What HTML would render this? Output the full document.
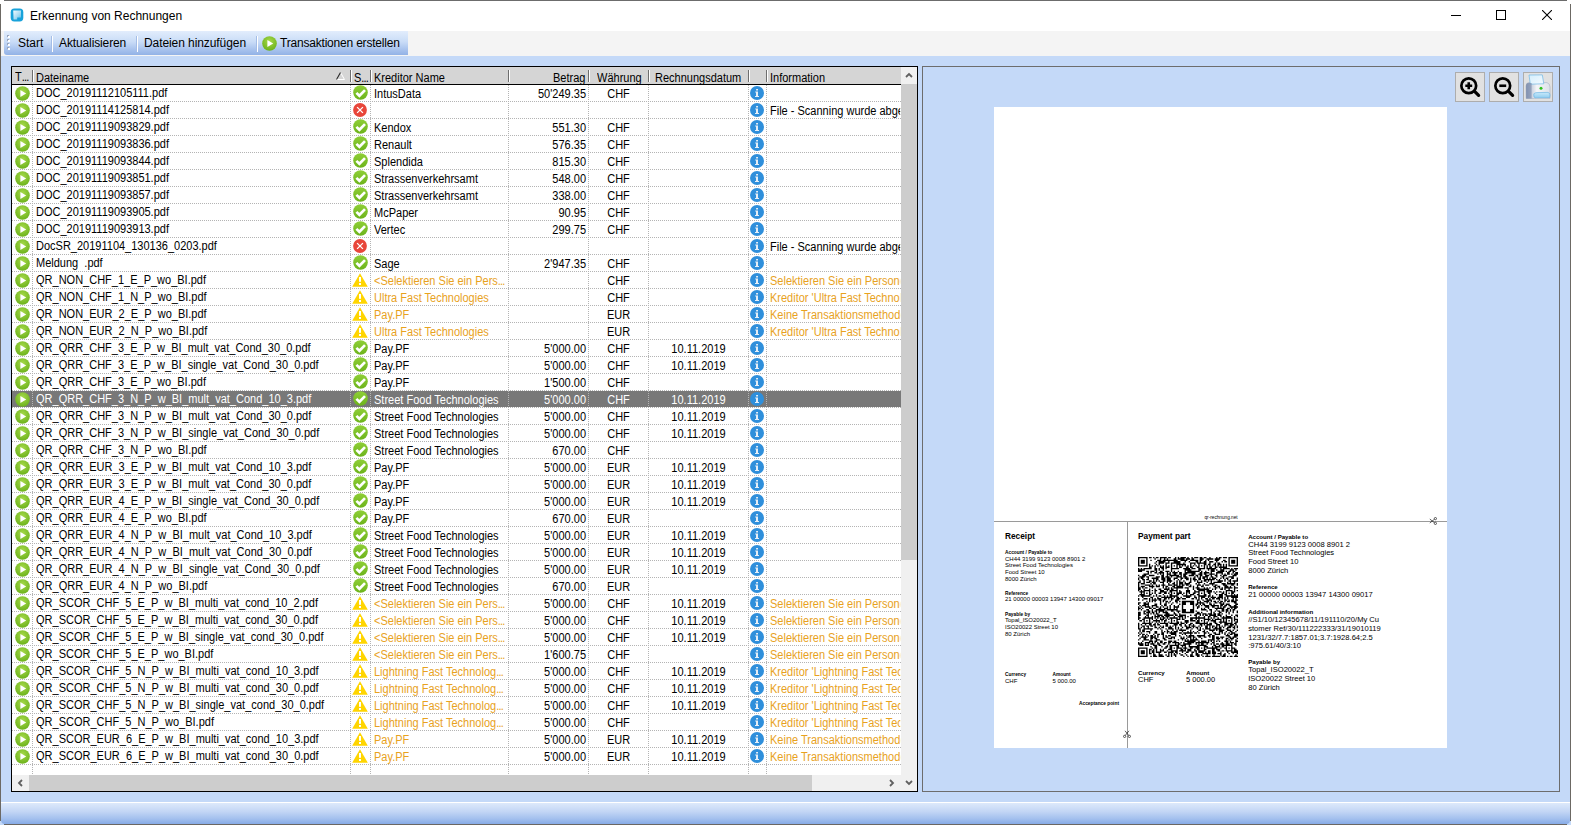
<!DOCTYPE html>
<html><head><meta charset="utf-8"><style>
*{box-sizing:border-box}
html,body{margin:0;padding:0}
body{width:1571px;height:825px;overflow:hidden;position:relative;background:#c4d9f8;font-family:"Liberation Sans",sans-serif;color:#000}
.a{position:absolute}
.ic{position:absolute;display:block}
.t{position:absolute;white-space:pre;font-size:11px;line-height:16px}
.g{position:absolute;white-space:pre;font-size:12px;line-height:16px;transform:scaleX(0.917);transform-origin:0 0}
.gr{transform-origin:100% 0}.gc{transform-origin:50% 0}
</style></head><body>
<svg width="0" height="0" style="position:absolute"><defs><linearGradient id="gok" x1="0" y1="0" x2="0" y2="1"><stop offset="0" stop-color="#8fcf37"/><stop offset="1" stop-color="#6cb31b"/></linearGradient></defs></svg>

<div class="a" style="left:0;top:0;width:1571px;height:31px;background:#fff"></div>
<div class="a" style="left:0;top:31px;width:1571px;height:25px;background:#f4f4f4"></div>
<svg class="ic" style="left:10px;top:8px" width="14" height="14" viewBox="0 0 14 14"><defs><linearGradient id="gi" x1="0" y1="0" x2="1" y2="1"><stop offset="0" stop-color="#ffffff"/><stop offset="0.6" stop-color="#a9dcf3"/><stop offset="1" stop-color="#4fb6e6"/></linearGradient></defs><rect x="0.7" y="0.6" width="12.6" height="12.8" rx="3.6" fill="#18a2da"/><path d="M3.2 2.6 H11 V9.4 H7.2 V11.6 H3.6 Z" fill="url(#gi)" opacity="0.95"/></svg>
<div class="t" style="left:30px;top:8px;font-size:12px;line-height:16px">Erkennung von Rechnungen</div>
<div class="a" style="left:1451px;top:15px;width:10px;height:1px;background:#000"></div>
<div class="a" style="left:1496px;top:10px;width:10px;height:10px;border:1px solid #000"></div>
<svg class="ic" style="left:1542px;top:10px" width="10" height="10" viewBox="0 0 10 10"><path d="M0 0 L10 10 M10 0 L0 10" stroke="#000" stroke-width="1.1"/></svg>
<div class="a" style="left:4px;top:31px;width:404px;height:24px;border-radius:0 0 0 3px;background:linear-gradient(#e2edfc 0%,#c9dcf7 45%,#aac4ee 75%,#92b2e6 100%)"></div>
<div class="a" style="left:7px;top:35px;width:2px;height:2px;background:#9aa6bc"></div>
<div class="a" style="left:8px;top:36px;width:2px;height:2px;background:#fff"></div>
<div class="a" style="left:7px;top:39px;width:2px;height:2px;background:#9aa6bc"></div>
<div class="a" style="left:8px;top:40px;width:2px;height:2px;background:#fff"></div>
<div class="a" style="left:7px;top:43px;width:2px;height:2px;background:#9aa6bc"></div>
<div class="a" style="left:8px;top:44px;width:2px;height:2px;background:#fff"></div>
<div class="a" style="left:7px;top:47px;width:2px;height:2px;background:#9aa6bc"></div>
<div class="a" style="left:8px;top:48px;width:2px;height:2px;background:#fff"></div>
<div class="t" style="left:18px;top:35px;font-size:12px">Start</div>
<div class="a" style="left:51px;top:36px;width:1px;height:16px;background:#a4bde6"></div>
<div class="a" style="left:52px;top:36px;width:1px;height:16px;background:#fff"></div>
<div class="a" style="left:136px;top:36px;width:1px;height:16px;background:#a4bde6"></div>
<div class="a" style="left:137px;top:36px;width:1px;height:16px;background:#fff"></div>
<div class="a" style="left:256px;top:36px;width:1px;height:16px;background:#a4bde6"></div>
<div class="a" style="left:257px;top:36px;width:1px;height:16px;background:#fff"></div>
<div class="t" style="left:59px;top:35px;font-size:12px;letter-spacing:-0.12px">Aktualisieren</div>
<div class="t" style="left:144px;top:35px;font-size:12px;letter-spacing:-0.08px">Dateien hinzufügen</div>
<svg class="ic" style="left:262px;top:36px" width="15" height="15" viewBox="0 0 15 15"><defs><radialGradient id="gp" cx="50%" cy="35%" r="65%"><stop offset="0" stop-color="#a6d94a"/><stop offset="1" stop-color="#6cb21c"/></radialGradient></defs><circle cx="7.5" cy="7.5" r="7.3" fill="url(#gp)"/><path d="M5.4 3.9 L11.2 7.5 L5.4 11.1 Z" fill="#fff"/></svg>
<div class="t" style="left:280px;top:35px;font-size:12px;letter-spacing:-0.2px">Transaktionen erstellen</div>
<div class="a" style="left:11px;top:66px;width:907px;height:726px;border:1px solid #000;background:#fff"></div>
<div class="a" style="left:12px;top:67px;width:889px;height:17px;background:#d5d5d5"></div>
<div class="a" style="left:12px;top:84px;width:889px;height:1px;background:#000"></div>
<div class="a" style="left:32px;top:70px;width:1px;height:12px;background:#6e6e6e"></div>
<div class="a" style="left:33px;top:70px;width:1px;height:12px;background:#fff"></div>
<div class="a" style="left:350px;top:70px;width:1px;height:12px;background:#6e6e6e"></div>
<div class="a" style="left:351px;top:70px;width:1px;height:12px;background:#fff"></div>
<div class="a" style="left:370px;top:70px;width:1px;height:12px;background:#6e6e6e"></div>
<div class="a" style="left:371px;top:70px;width:1px;height:12px;background:#fff"></div>
<div class="a" style="left:508px;top:70px;width:1px;height:12px;background:#6e6e6e"></div>
<div class="a" style="left:509px;top:70px;width:1px;height:12px;background:#fff"></div>
<div class="a" style="left:588px;top:70px;width:1px;height:12px;background:#6e6e6e"></div>
<div class="a" style="left:589px;top:70px;width:1px;height:12px;background:#fff"></div>
<div class="a" style="left:648px;top:70px;width:1px;height:12px;background:#6e6e6e"></div>
<div class="a" style="left:649px;top:70px;width:1px;height:12px;background:#fff"></div>
<div class="a" style="left:748px;top:70px;width:1px;height:12px;background:#6e6e6e"></div>
<div class="a" style="left:749px;top:70px;width:1px;height:12px;background:#fff"></div>
<div class="a" style="left:766px;top:70px;width:1px;height:12px;background:#6e6e6e"></div>
<div class="a" style="left:767px;top:70px;width:1px;height:12px;background:#fff"></div>
<div class="g" style="left:15px;top:68.8px">T<span style="letter-spacing:-0.9px">...</span></div>
<div class="g" style="left:36px;top:69.8px">Dateiname</div>
<div class="g" style="left:354px;top:69.8px">S<span style="letter-spacing:-0.9px">...</span></div>
<div class="g" style="left:374px;top:69.8px">Kreditor Name</div>
<div class="g" style="left:655px;top:69.8px">Rechnungsdatum</div>
<div class="g" style="left:770px;top:69.8px">Information</div>
<div class="g" style="left:553px;top:69.8px">Betrag</div>
<div class="g" style="left:597px;top:69.8px">Währung</div>
<svg class="ic" style="left:336px;top:72px" width="9" height="8" viewBox="0 0 9 8"><path d="M4.5 0.5 L8.5 7.5 L0.5 7.5 Z" fill="none" stroke="#fff" stroke-width="1"/><path d="M4.5 0.5 L0.5 7.5" stroke="#222" stroke-width="1.1"/></svg>
<div class="a" style="left:12px;top:85px;width:889px;height:690px;overflow:hidden">
<div class="a" style="left:0;top:16px;width:889px;height:1px;background:repeating-linear-gradient(90deg,#b4b4b4 0 1px,transparent 1px 2px)"></div>
<svg class="ic" style="left:3px;top:1px" width="15" height="15" viewBox="0 0 15 15"><defs><radialGradient id="gp" cx="50%" cy="35%" r="65%"><stop offset="0" stop-color="#a6d94a"/><stop offset="1" stop-color="#6cb21c"/></radialGradient></defs><circle cx="7.5" cy="7.5" r="7.3" fill="url(#gp)"/><path d="M5.4 3.9 L11.2 7.5 L5.4 11.1 Z" fill="#fff"/></svg>
<div class="g" style="left:24px;top:0.1px;color:#000">DOC_20191112105111.pdf</div>
<svg class="ic" style="left:341px;top:0px" width="15" height="15" viewBox="0 0 15 15"><circle cx="7.5" cy="7.5" r="7.3" fill="url(#gok)"/><path d="M3.4 7.9 L6.4 10.8 L12 5.1" stroke="#fff" stroke-width="2.7" fill="none" stroke-linecap="butt"/></svg>
<div class="g" style="left:362px;top:0.5px;color:#000">IntusData</div>
<div class="g gr" style="left:497px;top:0.5px;width:77px;text-align:right;color:#000">50'249.35</div>
<div class="g gc" style="left:577px;top:0.5px;width:59px;text-align:center;color:#000">CHF</div>
<svg class="ic" style="left:738px;top:1px" width="15" height="15" viewBox="0 0 15 15"><circle cx="7" cy="7" r="7" fill="#2f8fdb"/><rect x="6.1" y="3" width="1.9" height="1.5" fill="#e6eef6"/><path d="M5.2 5.6 H8 V10 H9 V11 H5 V10 H6 V6.6 H5.2 Z" fill="#e6eef6"/></svg>
<div class="a" style="left:0;top:33px;width:889px;height:1px;background:repeating-linear-gradient(90deg,#b4b4b4 0 1px,transparent 1px 2px)"></div>
<svg class="ic" style="left:3px;top:18px" width="15" height="15" viewBox="0 0 15 15"><defs><radialGradient id="gp" cx="50%" cy="35%" r="65%"><stop offset="0" stop-color="#a6d94a"/><stop offset="1" stop-color="#6cb21c"/></radialGradient></defs><circle cx="7.5" cy="7.5" r="7.3" fill="url(#gp)"/><path d="M5.4 3.9 L11.2 7.5 L5.4 11.1 Z" fill="#fff"/></svg>
<div class="g" style="left:24px;top:17.1px;color:#000">DOC_20191114125814.pdf</div>
<svg class="ic" style="left:341px;top:18px" width="15" height="15" viewBox="0 0 15 15"><circle cx="7" cy="7" r="6.9" fill="#e8463a"/><path d="M4.1 4.1 L9.9 9.9 M9.9 4.1 L4.1 9.9" stroke="#fff" stroke-width="1.3" fill="none"/></svg>
<svg class="ic" style="left:738px;top:18px" width="15" height="15" viewBox="0 0 15 15"><circle cx="7" cy="7" r="7" fill="#2f8fdb"/><rect x="6.1" y="3" width="1.9" height="1.5" fill="#e6eef6"/><path d="M5.2 5.6 H8 V10 H9 V11 H5 V10 H6 V6.6 H5.2 Z" fill="#e6eef6"/></svg>
<div class="g" style="left:758px;top:17.5px;width:141.8px;overflow:hidden;color:#000">File - Scanning wurde abgebrochen</div>
<div class="a" style="left:0;top:50px;width:889px;height:1px;background:repeating-linear-gradient(90deg,#b4b4b4 0 1px,transparent 1px 2px)"></div>
<svg class="ic" style="left:3px;top:35px" width="15" height="15" viewBox="0 0 15 15"><defs><radialGradient id="gp" cx="50%" cy="35%" r="65%"><stop offset="0" stop-color="#a6d94a"/><stop offset="1" stop-color="#6cb21c"/></radialGradient></defs><circle cx="7.5" cy="7.5" r="7.3" fill="url(#gp)"/><path d="M5.4 3.9 L11.2 7.5 L5.4 11.1 Z" fill="#fff"/></svg>
<div class="g" style="left:24px;top:34.1px;color:#000">DOC_20191119093829.pdf</div>
<svg class="ic" style="left:341px;top:34px" width="15" height="15" viewBox="0 0 15 15"><circle cx="7.5" cy="7.5" r="7.3" fill="url(#gok)"/><path d="M3.4 7.9 L6.4 10.8 L12 5.1" stroke="#fff" stroke-width="2.7" fill="none" stroke-linecap="butt"/></svg>
<div class="g" style="left:362px;top:34.5px;color:#000">Kendox</div>
<div class="g gr" style="left:497px;top:34.5px;width:77px;text-align:right;color:#000">551.30</div>
<div class="g gc" style="left:577px;top:34.5px;width:59px;text-align:center;color:#000">CHF</div>
<svg class="ic" style="left:738px;top:35px" width="15" height="15" viewBox="0 0 15 15"><circle cx="7" cy="7" r="7" fill="#2f8fdb"/><rect x="6.1" y="3" width="1.9" height="1.5" fill="#e6eef6"/><path d="M5.2 5.6 H8 V10 H9 V11 H5 V10 H6 V6.6 H5.2 Z" fill="#e6eef6"/></svg>
<div class="a" style="left:0;top:67px;width:889px;height:1px;background:repeating-linear-gradient(90deg,#b4b4b4 0 1px,transparent 1px 2px)"></div>
<svg class="ic" style="left:3px;top:52px" width="15" height="15" viewBox="0 0 15 15"><defs><radialGradient id="gp" cx="50%" cy="35%" r="65%"><stop offset="0" stop-color="#a6d94a"/><stop offset="1" stop-color="#6cb21c"/></radialGradient></defs><circle cx="7.5" cy="7.5" r="7.3" fill="url(#gp)"/><path d="M5.4 3.9 L11.2 7.5 L5.4 11.1 Z" fill="#fff"/></svg>
<div class="g" style="left:24px;top:51.1px;color:#000">DOC_20191119093836.pdf</div>
<svg class="ic" style="left:341px;top:51px" width="15" height="15" viewBox="0 0 15 15"><circle cx="7.5" cy="7.5" r="7.3" fill="url(#gok)"/><path d="M3.4 7.9 L6.4 10.8 L12 5.1" stroke="#fff" stroke-width="2.7" fill="none" stroke-linecap="butt"/></svg>
<div class="g" style="left:362px;top:51.5px;color:#000">Renault</div>
<div class="g gr" style="left:497px;top:51.5px;width:77px;text-align:right;color:#000">576.35</div>
<div class="g gc" style="left:577px;top:51.5px;width:59px;text-align:center;color:#000">CHF</div>
<svg class="ic" style="left:738px;top:52px" width="15" height="15" viewBox="0 0 15 15"><circle cx="7" cy="7" r="7" fill="#2f8fdb"/><rect x="6.1" y="3" width="1.9" height="1.5" fill="#e6eef6"/><path d="M5.2 5.6 H8 V10 H9 V11 H5 V10 H6 V6.6 H5.2 Z" fill="#e6eef6"/></svg>
<div class="a" style="left:0;top:84px;width:889px;height:1px;background:repeating-linear-gradient(90deg,#b4b4b4 0 1px,transparent 1px 2px)"></div>
<svg class="ic" style="left:3px;top:69px" width="15" height="15" viewBox="0 0 15 15"><defs><radialGradient id="gp" cx="50%" cy="35%" r="65%"><stop offset="0" stop-color="#a6d94a"/><stop offset="1" stop-color="#6cb21c"/></radialGradient></defs><circle cx="7.5" cy="7.5" r="7.3" fill="url(#gp)"/><path d="M5.4 3.9 L11.2 7.5 L5.4 11.1 Z" fill="#fff"/></svg>
<div class="g" style="left:24px;top:68.1px;color:#000">DOC_20191119093844.pdf</div>
<svg class="ic" style="left:341px;top:68px" width="15" height="15" viewBox="0 0 15 15"><circle cx="7.5" cy="7.5" r="7.3" fill="url(#gok)"/><path d="M3.4 7.9 L6.4 10.8 L12 5.1" stroke="#fff" stroke-width="2.7" fill="none" stroke-linecap="butt"/></svg>
<div class="g" style="left:362px;top:68.5px;color:#000">Splendida</div>
<div class="g gr" style="left:497px;top:68.5px;width:77px;text-align:right;color:#000">815.30</div>
<div class="g gc" style="left:577px;top:68.5px;width:59px;text-align:center;color:#000">CHF</div>
<svg class="ic" style="left:738px;top:69px" width="15" height="15" viewBox="0 0 15 15"><circle cx="7" cy="7" r="7" fill="#2f8fdb"/><rect x="6.1" y="3" width="1.9" height="1.5" fill="#e6eef6"/><path d="M5.2 5.6 H8 V10 H9 V11 H5 V10 H6 V6.6 H5.2 Z" fill="#e6eef6"/></svg>
<div class="a" style="left:0;top:101px;width:889px;height:1px;background:repeating-linear-gradient(90deg,#b4b4b4 0 1px,transparent 1px 2px)"></div>
<svg class="ic" style="left:3px;top:86px" width="15" height="15" viewBox="0 0 15 15"><defs><radialGradient id="gp" cx="50%" cy="35%" r="65%"><stop offset="0" stop-color="#a6d94a"/><stop offset="1" stop-color="#6cb21c"/></radialGradient></defs><circle cx="7.5" cy="7.5" r="7.3" fill="url(#gp)"/><path d="M5.4 3.9 L11.2 7.5 L5.4 11.1 Z" fill="#fff"/></svg>
<div class="g" style="left:24px;top:85.1px;color:#000">DOC_20191119093851.pdf</div>
<svg class="ic" style="left:341px;top:85px" width="15" height="15" viewBox="0 0 15 15"><circle cx="7.5" cy="7.5" r="7.3" fill="url(#gok)"/><path d="M3.4 7.9 L6.4 10.8 L12 5.1" stroke="#fff" stroke-width="2.7" fill="none" stroke-linecap="butt"/></svg>
<div class="g" style="left:362px;top:85.5px;color:#000">Strassenverkehrsamt</div>
<div class="g gr" style="left:497px;top:85.5px;width:77px;text-align:right;color:#000">548.00</div>
<div class="g gc" style="left:577px;top:85.5px;width:59px;text-align:center;color:#000">CHF</div>
<svg class="ic" style="left:738px;top:86px" width="15" height="15" viewBox="0 0 15 15"><circle cx="7" cy="7" r="7" fill="#2f8fdb"/><rect x="6.1" y="3" width="1.9" height="1.5" fill="#e6eef6"/><path d="M5.2 5.6 H8 V10 H9 V11 H5 V10 H6 V6.6 H5.2 Z" fill="#e6eef6"/></svg>
<div class="a" style="left:0;top:118px;width:889px;height:1px;background:repeating-linear-gradient(90deg,#b4b4b4 0 1px,transparent 1px 2px)"></div>
<svg class="ic" style="left:3px;top:103px" width="15" height="15" viewBox="0 0 15 15"><defs><radialGradient id="gp" cx="50%" cy="35%" r="65%"><stop offset="0" stop-color="#a6d94a"/><stop offset="1" stop-color="#6cb21c"/></radialGradient></defs><circle cx="7.5" cy="7.5" r="7.3" fill="url(#gp)"/><path d="M5.4 3.9 L11.2 7.5 L5.4 11.1 Z" fill="#fff"/></svg>
<div class="g" style="left:24px;top:102.1px;color:#000">DOC_20191119093857.pdf</div>
<svg class="ic" style="left:341px;top:102px" width="15" height="15" viewBox="0 0 15 15"><circle cx="7.5" cy="7.5" r="7.3" fill="url(#gok)"/><path d="M3.4 7.9 L6.4 10.8 L12 5.1" stroke="#fff" stroke-width="2.7" fill="none" stroke-linecap="butt"/></svg>
<div class="g" style="left:362px;top:102.5px;color:#000">Strassenverkehrsamt</div>
<div class="g gr" style="left:497px;top:102.5px;width:77px;text-align:right;color:#000">338.00</div>
<div class="g gc" style="left:577px;top:102.5px;width:59px;text-align:center;color:#000">CHF</div>
<svg class="ic" style="left:738px;top:103px" width="15" height="15" viewBox="0 0 15 15"><circle cx="7" cy="7" r="7" fill="#2f8fdb"/><rect x="6.1" y="3" width="1.9" height="1.5" fill="#e6eef6"/><path d="M5.2 5.6 H8 V10 H9 V11 H5 V10 H6 V6.6 H5.2 Z" fill="#e6eef6"/></svg>
<div class="a" style="left:0;top:135px;width:889px;height:1px;background:repeating-linear-gradient(90deg,#b4b4b4 0 1px,transparent 1px 2px)"></div>
<svg class="ic" style="left:3px;top:120px" width="15" height="15" viewBox="0 0 15 15"><defs><radialGradient id="gp" cx="50%" cy="35%" r="65%"><stop offset="0" stop-color="#a6d94a"/><stop offset="1" stop-color="#6cb21c"/></radialGradient></defs><circle cx="7.5" cy="7.5" r="7.3" fill="url(#gp)"/><path d="M5.4 3.9 L11.2 7.5 L5.4 11.1 Z" fill="#fff"/></svg>
<div class="g" style="left:24px;top:119.1px;color:#000">DOC_20191119093905.pdf</div>
<svg class="ic" style="left:341px;top:119px" width="15" height="15" viewBox="0 0 15 15"><circle cx="7.5" cy="7.5" r="7.3" fill="url(#gok)"/><path d="M3.4 7.9 L6.4 10.8 L12 5.1" stroke="#fff" stroke-width="2.7" fill="none" stroke-linecap="butt"/></svg>
<div class="g" style="left:362px;top:119.5px;color:#000">McPaper</div>
<div class="g gr" style="left:497px;top:119.5px;width:77px;text-align:right;color:#000">90.95</div>
<div class="g gc" style="left:577px;top:119.5px;width:59px;text-align:center;color:#000">CHF</div>
<svg class="ic" style="left:738px;top:120px" width="15" height="15" viewBox="0 0 15 15"><circle cx="7" cy="7" r="7" fill="#2f8fdb"/><rect x="6.1" y="3" width="1.9" height="1.5" fill="#e6eef6"/><path d="M5.2 5.6 H8 V10 H9 V11 H5 V10 H6 V6.6 H5.2 Z" fill="#e6eef6"/></svg>
<div class="a" style="left:0;top:152px;width:889px;height:1px;background:repeating-linear-gradient(90deg,#b4b4b4 0 1px,transparent 1px 2px)"></div>
<svg class="ic" style="left:3px;top:137px" width="15" height="15" viewBox="0 0 15 15"><defs><radialGradient id="gp" cx="50%" cy="35%" r="65%"><stop offset="0" stop-color="#a6d94a"/><stop offset="1" stop-color="#6cb21c"/></radialGradient></defs><circle cx="7.5" cy="7.5" r="7.3" fill="url(#gp)"/><path d="M5.4 3.9 L11.2 7.5 L5.4 11.1 Z" fill="#fff"/></svg>
<div class="g" style="left:24px;top:136.1px;color:#000">DOC_20191119093913.pdf</div>
<svg class="ic" style="left:341px;top:136px" width="15" height="15" viewBox="0 0 15 15"><circle cx="7.5" cy="7.5" r="7.3" fill="url(#gok)"/><path d="M3.4 7.9 L6.4 10.8 L12 5.1" stroke="#fff" stroke-width="2.7" fill="none" stroke-linecap="butt"/></svg>
<div class="g" style="left:362px;top:136.5px;color:#000">Vertec</div>
<div class="g gr" style="left:497px;top:136.5px;width:77px;text-align:right;color:#000">299.75</div>
<div class="g gc" style="left:577px;top:136.5px;width:59px;text-align:center;color:#000">CHF</div>
<svg class="ic" style="left:738px;top:137px" width="15" height="15" viewBox="0 0 15 15"><circle cx="7" cy="7" r="7" fill="#2f8fdb"/><rect x="6.1" y="3" width="1.9" height="1.5" fill="#e6eef6"/><path d="M5.2 5.6 H8 V10 H9 V11 H5 V10 H6 V6.6 H5.2 Z" fill="#e6eef6"/></svg>
<div class="a" style="left:0;top:169px;width:889px;height:1px;background:repeating-linear-gradient(90deg,#b4b4b4 0 1px,transparent 1px 2px)"></div>
<svg class="ic" style="left:3px;top:154px" width="15" height="15" viewBox="0 0 15 15"><defs><radialGradient id="gp" cx="50%" cy="35%" r="65%"><stop offset="0" stop-color="#a6d94a"/><stop offset="1" stop-color="#6cb21c"/></radialGradient></defs><circle cx="7.5" cy="7.5" r="7.3" fill="url(#gp)"/><path d="M5.4 3.9 L11.2 7.5 L5.4 11.1 Z" fill="#fff"/></svg>
<div class="g" style="left:24px;top:153.1px;color:#000">DocSR_20191104_130136_0203.pdf</div>
<svg class="ic" style="left:341px;top:154px" width="15" height="15" viewBox="0 0 15 15"><circle cx="7" cy="7" r="6.9" fill="#e8463a"/><path d="M4.1 4.1 L9.9 9.9 M9.9 4.1 L4.1 9.9" stroke="#fff" stroke-width="1.3" fill="none"/></svg>
<svg class="ic" style="left:738px;top:154px" width="15" height="15" viewBox="0 0 15 15"><circle cx="7" cy="7" r="7" fill="#2f8fdb"/><rect x="6.1" y="3" width="1.9" height="1.5" fill="#e6eef6"/><path d="M5.2 5.6 H8 V10 H9 V11 H5 V10 H6 V6.6 H5.2 Z" fill="#e6eef6"/></svg>
<div class="g" style="left:758px;top:153.5px;width:141.8px;overflow:hidden;color:#000">File - Scanning wurde abgebrochen</div>
<div class="a" style="left:0;top:186px;width:889px;height:1px;background:repeating-linear-gradient(90deg,#b4b4b4 0 1px,transparent 1px 2px)"></div>
<svg class="ic" style="left:3px;top:171px" width="15" height="15" viewBox="0 0 15 15"><defs><radialGradient id="gp" cx="50%" cy="35%" r="65%"><stop offset="0" stop-color="#a6d94a"/><stop offset="1" stop-color="#6cb21c"/></radialGradient></defs><circle cx="7.5" cy="7.5" r="7.3" fill="url(#gp)"/><path d="M5.4 3.9 L11.2 7.5 L5.4 11.1 Z" fill="#fff"/></svg>
<div class="g" style="left:24px;top:170.1px;color:#000">Meldung&nbsp;&nbsp;.pdf</div>
<svg class="ic" style="left:341px;top:170px" width="15" height="15" viewBox="0 0 15 15"><circle cx="7.5" cy="7.5" r="7.3" fill="url(#gok)"/><path d="M3.4 7.9 L6.4 10.8 L12 5.1" stroke="#fff" stroke-width="2.7" fill="none" stroke-linecap="butt"/></svg>
<div class="g" style="left:362px;top:170.5px;color:#000">Sage</div>
<div class="g gr" style="left:497px;top:170.5px;width:77px;text-align:right;color:#000">2'947.35</div>
<div class="g gc" style="left:577px;top:170.5px;width:59px;text-align:center;color:#000">CHF</div>
<svg class="ic" style="left:738px;top:171px" width="15" height="15" viewBox="0 0 15 15"><circle cx="7" cy="7" r="7" fill="#2f8fdb"/><rect x="6.1" y="3" width="1.9" height="1.5" fill="#e6eef6"/><path d="M5.2 5.6 H8 V10 H9 V11 H5 V10 H6 V6.6 H5.2 Z" fill="#e6eef6"/></svg>
<div class="a" style="left:0;top:203px;width:889px;height:1px;background:repeating-linear-gradient(90deg,#b4b4b4 0 1px,transparent 1px 2px)"></div>
<svg class="ic" style="left:3px;top:188px" width="15" height="15" viewBox="0 0 15 15"><defs><radialGradient id="gp" cx="50%" cy="35%" r="65%"><stop offset="0" stop-color="#a6d94a"/><stop offset="1" stop-color="#6cb21c"/></radialGradient></defs><circle cx="7.5" cy="7.5" r="7.3" fill="url(#gp)"/><path d="M5.4 3.9 L11.2 7.5 L5.4 11.1 Z" fill="#fff"/></svg>
<div class="g" style="left:24px;top:187.1px;color:#000">QR_NON_CHF_1_E_P_wo_BI.pdf</div>
<svg class="ic" style="left:340px;top:188px" width="16" height="15" viewBox="0 0 16 15"><path d="M8 0.2 L15.8 13.8 L0.2 13.8 Z" fill="#ffd500"/><rect x="7" y="4" width="2" height="4.8" fill="#fff"/><rect x="7" y="10" width="2" height="2" fill="#fff"/></svg>
<div class="g" style="left:362px;top:187.5px;color:#e8a21e">&lt;Selektieren Sie ein Pers<span style="letter-spacing:-0.9px">...</span></div>
<div class="g gc" style="left:577px;top:187.5px;width:59px;text-align:center;color:#000">CHF</div>
<svg class="ic" style="left:738px;top:188px" width="15" height="15" viewBox="0 0 15 15"><circle cx="7" cy="7" r="7" fill="#2f8fdb"/><rect x="6.1" y="3" width="1.9" height="1.5" fill="#e6eef6"/><path d="M5.2 5.6 H8 V10 H9 V11 H5 V10 H6 V6.6 H5.2 Z" fill="#e6eef6"/></svg>
<div class="g" style="left:758px;top:187.5px;width:141.8px;overflow:hidden;color:#e8a21e">Selektieren Sie ein Personenkonto</div>
<div class="a" style="left:0;top:220px;width:889px;height:1px;background:repeating-linear-gradient(90deg,#b4b4b4 0 1px,transparent 1px 2px)"></div>
<svg class="ic" style="left:3px;top:205px" width="15" height="15" viewBox="0 0 15 15"><defs><radialGradient id="gp" cx="50%" cy="35%" r="65%"><stop offset="0" stop-color="#a6d94a"/><stop offset="1" stop-color="#6cb21c"/></radialGradient></defs><circle cx="7.5" cy="7.5" r="7.3" fill="url(#gp)"/><path d="M5.4 3.9 L11.2 7.5 L5.4 11.1 Z" fill="#fff"/></svg>
<div class="g" style="left:24px;top:204.1px;color:#000">QR_NON_CHF_1_N_P_wo_BI.pdf</div>
<svg class="ic" style="left:340px;top:205px" width="16" height="15" viewBox="0 0 16 15"><path d="M8 0.2 L15.8 13.8 L0.2 13.8 Z" fill="#ffd500"/><rect x="7" y="4" width="2" height="4.8" fill="#fff"/><rect x="7" y="10" width="2" height="2" fill="#fff"/></svg>
<div class="g" style="left:362px;top:204.5px;color:#e8a21e">Ultra Fast Technologies</div>
<div class="g gc" style="left:577px;top:204.5px;width:59px;text-align:center;color:#000">CHF</div>
<svg class="ic" style="left:738px;top:205px" width="15" height="15" viewBox="0 0 15 15"><circle cx="7" cy="7" r="7" fill="#2f8fdb"/><rect x="6.1" y="3" width="1.9" height="1.5" fill="#e6eef6"/><path d="M5.2 5.6 H8 V10 H9 V11 H5 V10 H6 V6.6 H5.2 Z" fill="#e6eef6"/></svg>
<div class="g" style="left:758px;top:204.5px;width:141.8px;overflow:hidden;color:#e8a21e">Kreditor 'Ultra Fast Technologies'</div>
<div class="a" style="left:0;top:237px;width:889px;height:1px;background:repeating-linear-gradient(90deg,#b4b4b4 0 1px,transparent 1px 2px)"></div>
<svg class="ic" style="left:3px;top:222px" width="15" height="15" viewBox="0 0 15 15"><defs><radialGradient id="gp" cx="50%" cy="35%" r="65%"><stop offset="0" stop-color="#a6d94a"/><stop offset="1" stop-color="#6cb21c"/></radialGradient></defs><circle cx="7.5" cy="7.5" r="7.3" fill="url(#gp)"/><path d="M5.4 3.9 L11.2 7.5 L5.4 11.1 Z" fill="#fff"/></svg>
<div class="g" style="left:24px;top:221.1px;color:#000">QR_NON_EUR_2_E_P_wo_BI.pdf</div>
<svg class="ic" style="left:340px;top:222px" width="16" height="15" viewBox="0 0 16 15"><path d="M8 0.2 L15.8 13.8 L0.2 13.8 Z" fill="#ffd500"/><rect x="7" y="4" width="2" height="4.8" fill="#fff"/><rect x="7" y="10" width="2" height="2" fill="#fff"/></svg>
<div class="g" style="left:362px;top:221.5px;color:#e8a21e">Pay.PF</div>
<div class="g gc" style="left:577px;top:221.5px;width:59px;text-align:center;color:#000">EUR</div>
<svg class="ic" style="left:738px;top:222px" width="15" height="15" viewBox="0 0 15 15"><circle cx="7" cy="7" r="7" fill="#2f8fdb"/><rect x="6.1" y="3" width="1.9" height="1.5" fill="#e6eef6"/><path d="M5.2 5.6 H8 V10 H9 V11 H5 V10 H6 V6.6 H5.2 Z" fill="#e6eef6"/></svg>
<div class="g" style="left:758px;top:221.5px;width:141.8px;overflow:hidden;color:#e8a21e">Keine Transaktionsmethode</div>
<div class="a" style="left:0;top:254px;width:889px;height:1px;background:repeating-linear-gradient(90deg,#b4b4b4 0 1px,transparent 1px 2px)"></div>
<svg class="ic" style="left:3px;top:239px" width="15" height="15" viewBox="0 0 15 15"><defs><radialGradient id="gp" cx="50%" cy="35%" r="65%"><stop offset="0" stop-color="#a6d94a"/><stop offset="1" stop-color="#6cb21c"/></radialGradient></defs><circle cx="7.5" cy="7.5" r="7.3" fill="url(#gp)"/><path d="M5.4 3.9 L11.2 7.5 L5.4 11.1 Z" fill="#fff"/></svg>
<div class="g" style="left:24px;top:238.1px;color:#000">QR_NON_EUR_2_N_P_wo_BI.pdf</div>
<svg class="ic" style="left:340px;top:239px" width="16" height="15" viewBox="0 0 16 15"><path d="M8 0.2 L15.8 13.8 L0.2 13.8 Z" fill="#ffd500"/><rect x="7" y="4" width="2" height="4.8" fill="#fff"/><rect x="7" y="10" width="2" height="2" fill="#fff"/></svg>
<div class="g" style="left:362px;top:238.5px;color:#e8a21e">Ultra Fast Technologies</div>
<div class="g gc" style="left:577px;top:238.5px;width:59px;text-align:center;color:#000">EUR</div>
<svg class="ic" style="left:738px;top:239px" width="15" height="15" viewBox="0 0 15 15"><circle cx="7" cy="7" r="7" fill="#2f8fdb"/><rect x="6.1" y="3" width="1.9" height="1.5" fill="#e6eef6"/><path d="M5.2 5.6 H8 V10 H9 V11 H5 V10 H6 V6.6 H5.2 Z" fill="#e6eef6"/></svg>
<div class="g" style="left:758px;top:238.5px;width:141.8px;overflow:hidden;color:#e8a21e">Kreditor 'Ultra Fast Technologies'</div>
<div class="a" style="left:0;top:271px;width:889px;height:1px;background:repeating-linear-gradient(90deg,#b4b4b4 0 1px,transparent 1px 2px)"></div>
<svg class="ic" style="left:3px;top:256px" width="15" height="15" viewBox="0 0 15 15"><defs><radialGradient id="gp" cx="50%" cy="35%" r="65%"><stop offset="0" stop-color="#a6d94a"/><stop offset="1" stop-color="#6cb21c"/></radialGradient></defs><circle cx="7.5" cy="7.5" r="7.3" fill="url(#gp)"/><path d="M5.4 3.9 L11.2 7.5 L5.4 11.1 Z" fill="#fff"/></svg>
<div class="g" style="left:24px;top:255.1px;color:#000">QR_QRR_CHF_3_E_P_w_BI_mult_vat_Cond_30_0.pdf</div>
<svg class="ic" style="left:341px;top:255px" width="15" height="15" viewBox="0 0 15 15"><circle cx="7.5" cy="7.5" r="7.3" fill="url(#gok)"/><path d="M3.4 7.9 L6.4 10.8 L12 5.1" stroke="#fff" stroke-width="2.7" fill="none" stroke-linecap="butt"/></svg>
<div class="g" style="left:362px;top:255.5px;color:#000">Pay.PF</div>
<div class="g gr" style="left:497px;top:255.5px;width:77px;text-align:right;color:#000">5'000.00</div>
<div class="g gc" style="left:577px;top:255.5px;width:59px;text-align:center;color:#000">CHF</div>
<div class="g gc" style="left:637px;top:255.5px;width:99px;text-align:center;color:#000">10.11.2019</div>
<svg class="ic" style="left:738px;top:256px" width="15" height="15" viewBox="0 0 15 15"><circle cx="7" cy="7" r="7" fill="#2f8fdb"/><rect x="6.1" y="3" width="1.9" height="1.5" fill="#e6eef6"/><path d="M5.2 5.6 H8 V10 H9 V11 H5 V10 H6 V6.6 H5.2 Z" fill="#e6eef6"/></svg>
<div class="a" style="left:0;top:288px;width:889px;height:1px;background:repeating-linear-gradient(90deg,#b4b4b4 0 1px,transparent 1px 2px)"></div>
<svg class="ic" style="left:3px;top:273px" width="15" height="15" viewBox="0 0 15 15"><defs><radialGradient id="gp" cx="50%" cy="35%" r="65%"><stop offset="0" stop-color="#a6d94a"/><stop offset="1" stop-color="#6cb21c"/></radialGradient></defs><circle cx="7.5" cy="7.5" r="7.3" fill="url(#gp)"/><path d="M5.4 3.9 L11.2 7.5 L5.4 11.1 Z" fill="#fff"/></svg>
<div class="g" style="left:24px;top:272.1px;color:#000">QR_QRR_CHF_3_E_P_w_BI_single_vat_Cond_30_0.pdf</div>
<svg class="ic" style="left:341px;top:272px" width="15" height="15" viewBox="0 0 15 15"><circle cx="7.5" cy="7.5" r="7.3" fill="url(#gok)"/><path d="M3.4 7.9 L6.4 10.8 L12 5.1" stroke="#fff" stroke-width="2.7" fill="none" stroke-linecap="butt"/></svg>
<div class="g" style="left:362px;top:272.5px;color:#000">Pay.PF</div>
<div class="g gr" style="left:497px;top:272.5px;width:77px;text-align:right;color:#000">5'000.00</div>
<div class="g gc" style="left:577px;top:272.5px;width:59px;text-align:center;color:#000">CHF</div>
<div class="g gc" style="left:637px;top:272.5px;width:99px;text-align:center;color:#000">10.11.2019</div>
<svg class="ic" style="left:738px;top:273px" width="15" height="15" viewBox="0 0 15 15"><circle cx="7" cy="7" r="7" fill="#2f8fdb"/><rect x="6.1" y="3" width="1.9" height="1.5" fill="#e6eef6"/><path d="M5.2 5.6 H8 V10 H9 V11 H5 V10 H6 V6.6 H5.2 Z" fill="#e6eef6"/></svg>
<div class="a" style="left:0;top:305px;width:889px;height:1px;background:repeating-linear-gradient(90deg,#b4b4b4 0 1px,transparent 1px 2px)"></div>
<svg class="ic" style="left:3px;top:290px" width="15" height="15" viewBox="0 0 15 15"><defs><radialGradient id="gp" cx="50%" cy="35%" r="65%"><stop offset="0" stop-color="#a6d94a"/><stop offset="1" stop-color="#6cb21c"/></radialGradient></defs><circle cx="7.5" cy="7.5" r="7.3" fill="url(#gp)"/><path d="M5.4 3.9 L11.2 7.5 L5.4 11.1 Z" fill="#fff"/></svg>
<div class="g" style="left:24px;top:289.1px;color:#000">QR_QRR_CHF_3_E_P_wo_BI.pdf</div>
<svg class="ic" style="left:341px;top:289px" width="15" height="15" viewBox="0 0 15 15"><circle cx="7.5" cy="7.5" r="7.3" fill="url(#gok)"/><path d="M3.4 7.9 L6.4 10.8 L12 5.1" stroke="#fff" stroke-width="2.7" fill="none" stroke-linecap="butt"/></svg>
<div class="g" style="left:362px;top:289.5px;color:#000">Pay.PF</div>
<div class="g gr" style="left:497px;top:289.5px;width:77px;text-align:right;color:#000">1'500.00</div>
<div class="g gc" style="left:577px;top:289.5px;width:59px;text-align:center;color:#000">CHF</div>
<svg class="ic" style="left:738px;top:290px" width="15" height="15" viewBox="0 0 15 15"><circle cx="7" cy="7" r="7" fill="#2f8fdb"/><rect x="6.1" y="3" width="1.9" height="1.5" fill="#e6eef6"/><path d="M5.2 5.6 H8 V10 H9 V11 H5 V10 H6 V6.6 H5.2 Z" fill="#e6eef6"/></svg>
<div class="a" style="left:0;top:306px;width:889px;height:16px;background:#787878"></div>
<div class="a" style="left:0;top:322px;width:889px;height:1px;background:repeating-linear-gradient(90deg,#b4b4b4 0 1px,transparent 1px 2px)"></div>
<svg class="ic" style="left:3px;top:307px" width="15" height="15" viewBox="0 0 15 15"><defs><radialGradient id="gp" cx="50%" cy="35%" r="65%"><stop offset="0" stop-color="#a6d94a"/><stop offset="1" stop-color="#6cb21c"/></radialGradient></defs><circle cx="7.5" cy="7.5" r="7.3" fill="url(#gp)"/><path d="M5.4 3.9 L11.2 7.5 L5.4 11.1 Z" fill="#fff"/></svg>
<div class="g" style="left:24px;top:306.1px;color:#fff">QR_QRR_CHF_3_N_P_w_BI_mult_vat_Cond_10_3.pdf</div>
<svg class="ic" style="left:341px;top:306px" width="15" height="15" viewBox="0 0 15 15"><circle cx="7.5" cy="7.5" r="7.3" fill="url(#gok)"/><path d="M3.4 7.9 L6.4 10.8 L12 5.1" stroke="#fff" stroke-width="2.7" fill="none" stroke-linecap="butt"/></svg>
<div class="g" style="left:362px;top:306.5px;color:#fff">Street Food Technologies</div>
<div class="g gr" style="left:497px;top:306.5px;width:77px;text-align:right;color:#fff">5'000.00</div>
<div class="g gc" style="left:577px;top:306.5px;width:59px;text-align:center;color:#fff">CHF</div>
<div class="g gc" style="left:637px;top:306.5px;width:99px;text-align:center;color:#fff">10.11.2019</div>
<svg class="ic" style="left:738px;top:307px" width="15" height="15" viewBox="0 0 15 15"><circle cx="7" cy="7" r="7" fill="#2f8fdb"/><rect x="6.1" y="3" width="1.9" height="1.5" fill="#e6eef6"/><path d="M5.2 5.6 H8 V10 H9 V11 H5 V10 H6 V6.6 H5.2 Z" fill="#e6eef6"/></svg>
<div class="a" style="left:0;top:339px;width:889px;height:1px;background:repeating-linear-gradient(90deg,#b4b4b4 0 1px,transparent 1px 2px)"></div>
<svg class="ic" style="left:3px;top:324px" width="15" height="15" viewBox="0 0 15 15"><defs><radialGradient id="gp" cx="50%" cy="35%" r="65%"><stop offset="0" stop-color="#a6d94a"/><stop offset="1" stop-color="#6cb21c"/></radialGradient></defs><circle cx="7.5" cy="7.5" r="7.3" fill="url(#gp)"/><path d="M5.4 3.9 L11.2 7.5 L5.4 11.1 Z" fill="#fff"/></svg>
<div class="g" style="left:24px;top:323.1px;color:#000">QR_QRR_CHF_3_N_P_w_BI_mult_vat_Cond_30_0.pdf</div>
<svg class="ic" style="left:341px;top:323px" width="15" height="15" viewBox="0 0 15 15"><circle cx="7.5" cy="7.5" r="7.3" fill="url(#gok)"/><path d="M3.4 7.9 L6.4 10.8 L12 5.1" stroke="#fff" stroke-width="2.7" fill="none" stroke-linecap="butt"/></svg>
<div class="g" style="left:362px;top:323.5px;color:#000">Street Food Technologies</div>
<div class="g gr" style="left:497px;top:323.5px;width:77px;text-align:right;color:#000">5'000.00</div>
<div class="g gc" style="left:577px;top:323.5px;width:59px;text-align:center;color:#000">CHF</div>
<div class="g gc" style="left:637px;top:323.5px;width:99px;text-align:center;color:#000">10.11.2019</div>
<svg class="ic" style="left:738px;top:324px" width="15" height="15" viewBox="0 0 15 15"><circle cx="7" cy="7" r="7" fill="#2f8fdb"/><rect x="6.1" y="3" width="1.9" height="1.5" fill="#e6eef6"/><path d="M5.2 5.6 H8 V10 H9 V11 H5 V10 H6 V6.6 H5.2 Z" fill="#e6eef6"/></svg>
<div class="a" style="left:0;top:356px;width:889px;height:1px;background:repeating-linear-gradient(90deg,#b4b4b4 0 1px,transparent 1px 2px)"></div>
<svg class="ic" style="left:3px;top:341px" width="15" height="15" viewBox="0 0 15 15"><defs><radialGradient id="gp" cx="50%" cy="35%" r="65%"><stop offset="0" stop-color="#a6d94a"/><stop offset="1" stop-color="#6cb21c"/></radialGradient></defs><circle cx="7.5" cy="7.5" r="7.3" fill="url(#gp)"/><path d="M5.4 3.9 L11.2 7.5 L5.4 11.1 Z" fill="#fff"/></svg>
<div class="g" style="left:24px;top:340.1px;color:#000">QR_QRR_CHF_3_N_P_w_BI_single_vat_Cond_30_0.pdf</div>
<svg class="ic" style="left:341px;top:340px" width="15" height="15" viewBox="0 0 15 15"><circle cx="7.5" cy="7.5" r="7.3" fill="url(#gok)"/><path d="M3.4 7.9 L6.4 10.8 L12 5.1" stroke="#fff" stroke-width="2.7" fill="none" stroke-linecap="butt"/></svg>
<div class="g" style="left:362px;top:340.5px;color:#000">Street Food Technologies</div>
<div class="g gr" style="left:497px;top:340.5px;width:77px;text-align:right;color:#000">5'000.00</div>
<div class="g gc" style="left:577px;top:340.5px;width:59px;text-align:center;color:#000">CHF</div>
<div class="g gc" style="left:637px;top:340.5px;width:99px;text-align:center;color:#000">10.11.2019</div>
<svg class="ic" style="left:738px;top:341px" width="15" height="15" viewBox="0 0 15 15"><circle cx="7" cy="7" r="7" fill="#2f8fdb"/><rect x="6.1" y="3" width="1.9" height="1.5" fill="#e6eef6"/><path d="M5.2 5.6 H8 V10 H9 V11 H5 V10 H6 V6.6 H5.2 Z" fill="#e6eef6"/></svg>
<div class="a" style="left:0;top:373px;width:889px;height:1px;background:repeating-linear-gradient(90deg,#b4b4b4 0 1px,transparent 1px 2px)"></div>
<svg class="ic" style="left:3px;top:358px" width="15" height="15" viewBox="0 0 15 15"><defs><radialGradient id="gp" cx="50%" cy="35%" r="65%"><stop offset="0" stop-color="#a6d94a"/><stop offset="1" stop-color="#6cb21c"/></radialGradient></defs><circle cx="7.5" cy="7.5" r="7.3" fill="url(#gp)"/><path d="M5.4 3.9 L11.2 7.5 L5.4 11.1 Z" fill="#fff"/></svg>
<div class="g" style="left:24px;top:357.1px;color:#000">QR_QRR_CHF_3_N_P_wo_BI.pdf</div>
<svg class="ic" style="left:341px;top:357px" width="15" height="15" viewBox="0 0 15 15"><circle cx="7.5" cy="7.5" r="7.3" fill="url(#gok)"/><path d="M3.4 7.9 L6.4 10.8 L12 5.1" stroke="#fff" stroke-width="2.7" fill="none" stroke-linecap="butt"/></svg>
<div class="g" style="left:362px;top:357.5px;color:#000">Street Food Technologies</div>
<div class="g gr" style="left:497px;top:357.5px;width:77px;text-align:right;color:#000">670.00</div>
<div class="g gc" style="left:577px;top:357.5px;width:59px;text-align:center;color:#000">CHF</div>
<svg class="ic" style="left:738px;top:358px" width="15" height="15" viewBox="0 0 15 15"><circle cx="7" cy="7" r="7" fill="#2f8fdb"/><rect x="6.1" y="3" width="1.9" height="1.5" fill="#e6eef6"/><path d="M5.2 5.6 H8 V10 H9 V11 H5 V10 H6 V6.6 H5.2 Z" fill="#e6eef6"/></svg>
<div class="a" style="left:0;top:390px;width:889px;height:1px;background:repeating-linear-gradient(90deg,#b4b4b4 0 1px,transparent 1px 2px)"></div>
<svg class="ic" style="left:3px;top:375px" width="15" height="15" viewBox="0 0 15 15"><defs><radialGradient id="gp" cx="50%" cy="35%" r="65%"><stop offset="0" stop-color="#a6d94a"/><stop offset="1" stop-color="#6cb21c"/></radialGradient></defs><circle cx="7.5" cy="7.5" r="7.3" fill="url(#gp)"/><path d="M5.4 3.9 L11.2 7.5 L5.4 11.1 Z" fill="#fff"/></svg>
<div class="g" style="left:24px;top:374.1px;color:#000">QR_QRR_EUR_3_E_P_w_BI_mult_vat_Cond_10_3.pdf</div>
<svg class="ic" style="left:341px;top:374px" width="15" height="15" viewBox="0 0 15 15"><circle cx="7.5" cy="7.5" r="7.3" fill="url(#gok)"/><path d="M3.4 7.9 L6.4 10.8 L12 5.1" stroke="#fff" stroke-width="2.7" fill="none" stroke-linecap="butt"/></svg>
<div class="g" style="left:362px;top:374.5px;color:#000">Pay.PF</div>
<div class="g gr" style="left:497px;top:374.5px;width:77px;text-align:right;color:#000">5'000.00</div>
<div class="g gc" style="left:577px;top:374.5px;width:59px;text-align:center;color:#000">EUR</div>
<div class="g gc" style="left:637px;top:374.5px;width:99px;text-align:center;color:#000">10.11.2019</div>
<svg class="ic" style="left:738px;top:375px" width="15" height="15" viewBox="0 0 15 15"><circle cx="7" cy="7" r="7" fill="#2f8fdb"/><rect x="6.1" y="3" width="1.9" height="1.5" fill="#e6eef6"/><path d="M5.2 5.6 H8 V10 H9 V11 H5 V10 H6 V6.6 H5.2 Z" fill="#e6eef6"/></svg>
<div class="a" style="left:0;top:407px;width:889px;height:1px;background:repeating-linear-gradient(90deg,#b4b4b4 0 1px,transparent 1px 2px)"></div>
<svg class="ic" style="left:3px;top:392px" width="15" height="15" viewBox="0 0 15 15"><defs><radialGradient id="gp" cx="50%" cy="35%" r="65%"><stop offset="0" stop-color="#a6d94a"/><stop offset="1" stop-color="#6cb21c"/></radialGradient></defs><circle cx="7.5" cy="7.5" r="7.3" fill="url(#gp)"/><path d="M5.4 3.9 L11.2 7.5 L5.4 11.1 Z" fill="#fff"/></svg>
<div class="g" style="left:24px;top:391.1px;color:#000">QR_QRR_EUR_3_E_P_w_BI_mult_vat_Cond_30_0.pdf</div>
<svg class="ic" style="left:341px;top:391px" width="15" height="15" viewBox="0 0 15 15"><circle cx="7.5" cy="7.5" r="7.3" fill="url(#gok)"/><path d="M3.4 7.9 L6.4 10.8 L12 5.1" stroke="#fff" stroke-width="2.7" fill="none" stroke-linecap="butt"/></svg>
<div class="g" style="left:362px;top:391.5px;color:#000">Pay.PF</div>
<div class="g gr" style="left:497px;top:391.5px;width:77px;text-align:right;color:#000">5'000.00</div>
<div class="g gc" style="left:577px;top:391.5px;width:59px;text-align:center;color:#000">EUR</div>
<div class="g gc" style="left:637px;top:391.5px;width:99px;text-align:center;color:#000">10.11.2019</div>
<svg class="ic" style="left:738px;top:392px" width="15" height="15" viewBox="0 0 15 15"><circle cx="7" cy="7" r="7" fill="#2f8fdb"/><rect x="6.1" y="3" width="1.9" height="1.5" fill="#e6eef6"/><path d="M5.2 5.6 H8 V10 H9 V11 H5 V10 H6 V6.6 H5.2 Z" fill="#e6eef6"/></svg>
<div class="a" style="left:0;top:424px;width:889px;height:1px;background:repeating-linear-gradient(90deg,#b4b4b4 0 1px,transparent 1px 2px)"></div>
<svg class="ic" style="left:3px;top:409px" width="15" height="15" viewBox="0 0 15 15"><defs><radialGradient id="gp" cx="50%" cy="35%" r="65%"><stop offset="0" stop-color="#a6d94a"/><stop offset="1" stop-color="#6cb21c"/></radialGradient></defs><circle cx="7.5" cy="7.5" r="7.3" fill="url(#gp)"/><path d="M5.4 3.9 L11.2 7.5 L5.4 11.1 Z" fill="#fff"/></svg>
<div class="g" style="left:24px;top:408.1px;color:#000">QR_QRR_EUR_4_E_P_w_BI_single_vat_Cond_30_0.pdf</div>
<svg class="ic" style="left:341px;top:408px" width="15" height="15" viewBox="0 0 15 15"><circle cx="7.5" cy="7.5" r="7.3" fill="url(#gok)"/><path d="M3.4 7.9 L6.4 10.8 L12 5.1" stroke="#fff" stroke-width="2.7" fill="none" stroke-linecap="butt"/></svg>
<div class="g" style="left:362px;top:408.5px;color:#000">Pay.PF</div>
<div class="g gr" style="left:497px;top:408.5px;width:77px;text-align:right;color:#000">5'000.00</div>
<div class="g gc" style="left:577px;top:408.5px;width:59px;text-align:center;color:#000">EUR</div>
<div class="g gc" style="left:637px;top:408.5px;width:99px;text-align:center;color:#000">10.11.2019</div>
<svg class="ic" style="left:738px;top:409px" width="15" height="15" viewBox="0 0 15 15"><circle cx="7" cy="7" r="7" fill="#2f8fdb"/><rect x="6.1" y="3" width="1.9" height="1.5" fill="#e6eef6"/><path d="M5.2 5.6 H8 V10 H9 V11 H5 V10 H6 V6.6 H5.2 Z" fill="#e6eef6"/></svg>
<div class="a" style="left:0;top:441px;width:889px;height:1px;background:repeating-linear-gradient(90deg,#b4b4b4 0 1px,transparent 1px 2px)"></div>
<svg class="ic" style="left:3px;top:426px" width="15" height="15" viewBox="0 0 15 15"><defs><radialGradient id="gp" cx="50%" cy="35%" r="65%"><stop offset="0" stop-color="#a6d94a"/><stop offset="1" stop-color="#6cb21c"/></radialGradient></defs><circle cx="7.5" cy="7.5" r="7.3" fill="url(#gp)"/><path d="M5.4 3.9 L11.2 7.5 L5.4 11.1 Z" fill="#fff"/></svg>
<div class="g" style="left:24px;top:425.1px;color:#000">QR_QRR_EUR_4_E_P_wo_BI.pdf</div>
<svg class="ic" style="left:341px;top:425px" width="15" height="15" viewBox="0 0 15 15"><circle cx="7.5" cy="7.5" r="7.3" fill="url(#gok)"/><path d="M3.4 7.9 L6.4 10.8 L12 5.1" stroke="#fff" stroke-width="2.7" fill="none" stroke-linecap="butt"/></svg>
<div class="g" style="left:362px;top:425.5px;color:#000">Pay.PF</div>
<div class="g gr" style="left:497px;top:425.5px;width:77px;text-align:right;color:#000">670.00</div>
<div class="g gc" style="left:577px;top:425.5px;width:59px;text-align:center;color:#000">EUR</div>
<svg class="ic" style="left:738px;top:426px" width="15" height="15" viewBox="0 0 15 15"><circle cx="7" cy="7" r="7" fill="#2f8fdb"/><rect x="6.1" y="3" width="1.9" height="1.5" fill="#e6eef6"/><path d="M5.2 5.6 H8 V10 H9 V11 H5 V10 H6 V6.6 H5.2 Z" fill="#e6eef6"/></svg>
<div class="a" style="left:0;top:458px;width:889px;height:1px;background:repeating-linear-gradient(90deg,#b4b4b4 0 1px,transparent 1px 2px)"></div>
<svg class="ic" style="left:3px;top:443px" width="15" height="15" viewBox="0 0 15 15"><defs><radialGradient id="gp" cx="50%" cy="35%" r="65%"><stop offset="0" stop-color="#a6d94a"/><stop offset="1" stop-color="#6cb21c"/></radialGradient></defs><circle cx="7.5" cy="7.5" r="7.3" fill="url(#gp)"/><path d="M5.4 3.9 L11.2 7.5 L5.4 11.1 Z" fill="#fff"/></svg>
<div class="g" style="left:24px;top:442.1px;color:#000">QR_QRR_EUR_4_N_P_w_BI_mult_vat_Cond_10_3.pdf</div>
<svg class="ic" style="left:341px;top:442px" width="15" height="15" viewBox="0 0 15 15"><circle cx="7.5" cy="7.5" r="7.3" fill="url(#gok)"/><path d="M3.4 7.9 L6.4 10.8 L12 5.1" stroke="#fff" stroke-width="2.7" fill="none" stroke-linecap="butt"/></svg>
<div class="g" style="left:362px;top:442.5px;color:#000">Street Food Technologies</div>
<div class="g gr" style="left:497px;top:442.5px;width:77px;text-align:right;color:#000">5'000.00</div>
<div class="g gc" style="left:577px;top:442.5px;width:59px;text-align:center;color:#000">EUR</div>
<div class="g gc" style="left:637px;top:442.5px;width:99px;text-align:center;color:#000">10.11.2019</div>
<svg class="ic" style="left:738px;top:443px" width="15" height="15" viewBox="0 0 15 15"><circle cx="7" cy="7" r="7" fill="#2f8fdb"/><rect x="6.1" y="3" width="1.9" height="1.5" fill="#e6eef6"/><path d="M5.2 5.6 H8 V10 H9 V11 H5 V10 H6 V6.6 H5.2 Z" fill="#e6eef6"/></svg>
<div class="a" style="left:0;top:475px;width:889px;height:1px;background:repeating-linear-gradient(90deg,#b4b4b4 0 1px,transparent 1px 2px)"></div>
<svg class="ic" style="left:3px;top:460px" width="15" height="15" viewBox="0 0 15 15"><defs><radialGradient id="gp" cx="50%" cy="35%" r="65%"><stop offset="0" stop-color="#a6d94a"/><stop offset="1" stop-color="#6cb21c"/></radialGradient></defs><circle cx="7.5" cy="7.5" r="7.3" fill="url(#gp)"/><path d="M5.4 3.9 L11.2 7.5 L5.4 11.1 Z" fill="#fff"/></svg>
<div class="g" style="left:24px;top:459.1px;color:#000">QR_QRR_EUR_4_N_P_w_BI_mult_vat_Cond_30_0.pdf</div>
<svg class="ic" style="left:341px;top:459px" width="15" height="15" viewBox="0 0 15 15"><circle cx="7.5" cy="7.5" r="7.3" fill="url(#gok)"/><path d="M3.4 7.9 L6.4 10.8 L12 5.1" stroke="#fff" stroke-width="2.7" fill="none" stroke-linecap="butt"/></svg>
<div class="g" style="left:362px;top:459.5px;color:#000">Street Food Technologies</div>
<div class="g gr" style="left:497px;top:459.5px;width:77px;text-align:right;color:#000">5'000.00</div>
<div class="g gc" style="left:577px;top:459.5px;width:59px;text-align:center;color:#000">EUR</div>
<div class="g gc" style="left:637px;top:459.5px;width:99px;text-align:center;color:#000">10.11.2019</div>
<svg class="ic" style="left:738px;top:460px" width="15" height="15" viewBox="0 0 15 15"><circle cx="7" cy="7" r="7" fill="#2f8fdb"/><rect x="6.1" y="3" width="1.9" height="1.5" fill="#e6eef6"/><path d="M5.2 5.6 H8 V10 H9 V11 H5 V10 H6 V6.6 H5.2 Z" fill="#e6eef6"/></svg>
<div class="a" style="left:0;top:492px;width:889px;height:1px;background:repeating-linear-gradient(90deg,#b4b4b4 0 1px,transparent 1px 2px)"></div>
<svg class="ic" style="left:3px;top:477px" width="15" height="15" viewBox="0 0 15 15"><defs><radialGradient id="gp" cx="50%" cy="35%" r="65%"><stop offset="0" stop-color="#a6d94a"/><stop offset="1" stop-color="#6cb21c"/></radialGradient></defs><circle cx="7.5" cy="7.5" r="7.3" fill="url(#gp)"/><path d="M5.4 3.9 L11.2 7.5 L5.4 11.1 Z" fill="#fff"/></svg>
<div class="g" style="left:24px;top:476.1px;color:#000">QR_QRR_EUR_4_N_P_w_BI_single_vat_Cond_30_0.pdf</div>
<svg class="ic" style="left:341px;top:476px" width="15" height="15" viewBox="0 0 15 15"><circle cx="7.5" cy="7.5" r="7.3" fill="url(#gok)"/><path d="M3.4 7.9 L6.4 10.8 L12 5.1" stroke="#fff" stroke-width="2.7" fill="none" stroke-linecap="butt"/></svg>
<div class="g" style="left:362px;top:476.5px;color:#000">Street Food Technologies</div>
<div class="g gr" style="left:497px;top:476.5px;width:77px;text-align:right;color:#000">5'000.00</div>
<div class="g gc" style="left:577px;top:476.5px;width:59px;text-align:center;color:#000">EUR</div>
<div class="g gc" style="left:637px;top:476.5px;width:99px;text-align:center;color:#000">10.11.2019</div>
<svg class="ic" style="left:738px;top:477px" width="15" height="15" viewBox="0 0 15 15"><circle cx="7" cy="7" r="7" fill="#2f8fdb"/><rect x="6.1" y="3" width="1.9" height="1.5" fill="#e6eef6"/><path d="M5.2 5.6 H8 V10 H9 V11 H5 V10 H6 V6.6 H5.2 Z" fill="#e6eef6"/></svg>
<div class="a" style="left:0;top:509px;width:889px;height:1px;background:repeating-linear-gradient(90deg,#b4b4b4 0 1px,transparent 1px 2px)"></div>
<svg class="ic" style="left:3px;top:494px" width="15" height="15" viewBox="0 0 15 15"><defs><radialGradient id="gp" cx="50%" cy="35%" r="65%"><stop offset="0" stop-color="#a6d94a"/><stop offset="1" stop-color="#6cb21c"/></radialGradient></defs><circle cx="7.5" cy="7.5" r="7.3" fill="url(#gp)"/><path d="M5.4 3.9 L11.2 7.5 L5.4 11.1 Z" fill="#fff"/></svg>
<div class="g" style="left:24px;top:493.1px;color:#000">QR_QRR_EUR_4_N_P_wo_BI.pdf</div>
<svg class="ic" style="left:341px;top:493px" width="15" height="15" viewBox="0 0 15 15"><circle cx="7.5" cy="7.5" r="7.3" fill="url(#gok)"/><path d="M3.4 7.9 L6.4 10.8 L12 5.1" stroke="#fff" stroke-width="2.7" fill="none" stroke-linecap="butt"/></svg>
<div class="g" style="left:362px;top:493.5px;color:#000">Street Food Technologies</div>
<div class="g gr" style="left:497px;top:493.5px;width:77px;text-align:right;color:#000">670.00</div>
<div class="g gc" style="left:577px;top:493.5px;width:59px;text-align:center;color:#000">EUR</div>
<svg class="ic" style="left:738px;top:494px" width="15" height="15" viewBox="0 0 15 15"><circle cx="7" cy="7" r="7" fill="#2f8fdb"/><rect x="6.1" y="3" width="1.9" height="1.5" fill="#e6eef6"/><path d="M5.2 5.6 H8 V10 H9 V11 H5 V10 H6 V6.6 H5.2 Z" fill="#e6eef6"/></svg>
<div class="a" style="left:0;top:526px;width:889px;height:1px;background:repeating-linear-gradient(90deg,#b4b4b4 0 1px,transparent 1px 2px)"></div>
<svg class="ic" style="left:3px;top:511px" width="15" height="15" viewBox="0 0 15 15"><defs><radialGradient id="gp" cx="50%" cy="35%" r="65%"><stop offset="0" stop-color="#a6d94a"/><stop offset="1" stop-color="#6cb21c"/></radialGradient></defs><circle cx="7.5" cy="7.5" r="7.3" fill="url(#gp)"/><path d="M5.4 3.9 L11.2 7.5 L5.4 11.1 Z" fill="#fff"/></svg>
<div class="g" style="left:24px;top:510.1px;color:#000">QR_SCOR_CHF_5_E_P_w_BI_multi_vat_cond_10_2.pdf</div>
<svg class="ic" style="left:340px;top:511px" width="16" height="15" viewBox="0 0 16 15"><path d="M8 0.2 L15.8 13.8 L0.2 13.8 Z" fill="#ffd500"/><rect x="7" y="4" width="2" height="4.8" fill="#fff"/><rect x="7" y="10" width="2" height="2" fill="#fff"/></svg>
<div class="g" style="left:362px;top:510.5px;color:#e8a21e">&lt;Selektieren Sie ein Pers<span style="letter-spacing:-0.9px">...</span></div>
<div class="g gr" style="left:497px;top:510.5px;width:77px;text-align:right;color:#000">5'000.00</div>
<div class="g gc" style="left:577px;top:510.5px;width:59px;text-align:center;color:#000">CHF</div>
<div class="g gc" style="left:637px;top:510.5px;width:99px;text-align:center;color:#000">10.11.2019</div>
<svg class="ic" style="left:738px;top:511px" width="15" height="15" viewBox="0 0 15 15"><circle cx="7" cy="7" r="7" fill="#2f8fdb"/><rect x="6.1" y="3" width="1.9" height="1.5" fill="#e6eef6"/><path d="M5.2 5.6 H8 V10 H9 V11 H5 V10 H6 V6.6 H5.2 Z" fill="#e6eef6"/></svg>
<div class="g" style="left:758px;top:510.5px;width:141.8px;overflow:hidden;color:#e8a21e">Selektieren Sie ein Personenkonto</div>
<div class="a" style="left:0;top:543px;width:889px;height:1px;background:repeating-linear-gradient(90deg,#b4b4b4 0 1px,transparent 1px 2px)"></div>
<svg class="ic" style="left:3px;top:528px" width="15" height="15" viewBox="0 0 15 15"><defs><radialGradient id="gp" cx="50%" cy="35%" r="65%"><stop offset="0" stop-color="#a6d94a"/><stop offset="1" stop-color="#6cb21c"/></radialGradient></defs><circle cx="7.5" cy="7.5" r="7.3" fill="url(#gp)"/><path d="M5.4 3.9 L11.2 7.5 L5.4 11.1 Z" fill="#fff"/></svg>
<div class="g" style="left:24px;top:527.1px;color:#000">QR_SCOR_CHF_5_E_P_w_BI_multi_vat_cond_30_0.pdf</div>
<svg class="ic" style="left:340px;top:528px" width="16" height="15" viewBox="0 0 16 15"><path d="M8 0.2 L15.8 13.8 L0.2 13.8 Z" fill="#ffd500"/><rect x="7" y="4" width="2" height="4.8" fill="#fff"/><rect x="7" y="10" width="2" height="2" fill="#fff"/></svg>
<div class="g" style="left:362px;top:527.5px;color:#e8a21e">&lt;Selektieren Sie ein Pers<span style="letter-spacing:-0.9px">...</span></div>
<div class="g gr" style="left:497px;top:527.5px;width:77px;text-align:right;color:#000">5'000.00</div>
<div class="g gc" style="left:577px;top:527.5px;width:59px;text-align:center;color:#000">CHF</div>
<div class="g gc" style="left:637px;top:527.5px;width:99px;text-align:center;color:#000">10.11.2019</div>
<svg class="ic" style="left:738px;top:528px" width="15" height="15" viewBox="0 0 15 15"><circle cx="7" cy="7" r="7" fill="#2f8fdb"/><rect x="6.1" y="3" width="1.9" height="1.5" fill="#e6eef6"/><path d="M5.2 5.6 H8 V10 H9 V11 H5 V10 H6 V6.6 H5.2 Z" fill="#e6eef6"/></svg>
<div class="g" style="left:758px;top:527.5px;width:141.8px;overflow:hidden;color:#e8a21e">Selektieren Sie ein Personenkonto</div>
<div class="a" style="left:0;top:560px;width:889px;height:1px;background:repeating-linear-gradient(90deg,#b4b4b4 0 1px,transparent 1px 2px)"></div>
<svg class="ic" style="left:3px;top:545px" width="15" height="15" viewBox="0 0 15 15"><defs><radialGradient id="gp" cx="50%" cy="35%" r="65%"><stop offset="0" stop-color="#a6d94a"/><stop offset="1" stop-color="#6cb21c"/></radialGradient></defs><circle cx="7.5" cy="7.5" r="7.3" fill="url(#gp)"/><path d="M5.4 3.9 L11.2 7.5 L5.4 11.1 Z" fill="#fff"/></svg>
<div class="g" style="left:24px;top:544.1px;color:#000">QR_SCOR_CHF_5_E_P_w_BI_single_vat_cond_30_0.pdf</div>
<svg class="ic" style="left:340px;top:545px" width="16" height="15" viewBox="0 0 16 15"><path d="M8 0.2 L15.8 13.8 L0.2 13.8 Z" fill="#ffd500"/><rect x="7" y="4" width="2" height="4.8" fill="#fff"/><rect x="7" y="10" width="2" height="2" fill="#fff"/></svg>
<div class="g" style="left:362px;top:544.5px;color:#e8a21e">&lt;Selektieren Sie ein Pers<span style="letter-spacing:-0.9px">...</span></div>
<div class="g gr" style="left:497px;top:544.5px;width:77px;text-align:right;color:#000">5'000.00</div>
<div class="g gc" style="left:577px;top:544.5px;width:59px;text-align:center;color:#000">CHF</div>
<div class="g gc" style="left:637px;top:544.5px;width:99px;text-align:center;color:#000">10.11.2019</div>
<svg class="ic" style="left:738px;top:545px" width="15" height="15" viewBox="0 0 15 15"><circle cx="7" cy="7" r="7" fill="#2f8fdb"/><rect x="6.1" y="3" width="1.9" height="1.5" fill="#e6eef6"/><path d="M5.2 5.6 H8 V10 H9 V11 H5 V10 H6 V6.6 H5.2 Z" fill="#e6eef6"/></svg>
<div class="g" style="left:758px;top:544.5px;width:141.8px;overflow:hidden;color:#e8a21e">Selektieren Sie ein Personenkonto</div>
<div class="a" style="left:0;top:577px;width:889px;height:1px;background:repeating-linear-gradient(90deg,#b4b4b4 0 1px,transparent 1px 2px)"></div>
<svg class="ic" style="left:3px;top:562px" width="15" height="15" viewBox="0 0 15 15"><defs><radialGradient id="gp" cx="50%" cy="35%" r="65%"><stop offset="0" stop-color="#a6d94a"/><stop offset="1" stop-color="#6cb21c"/></radialGradient></defs><circle cx="7.5" cy="7.5" r="7.3" fill="url(#gp)"/><path d="M5.4 3.9 L11.2 7.5 L5.4 11.1 Z" fill="#fff"/></svg>
<div class="g" style="left:24px;top:561.1px;color:#000">QR_SCOR_CHF_5_E_P_wo_BI.pdf</div>
<svg class="ic" style="left:340px;top:562px" width="16" height="15" viewBox="0 0 16 15"><path d="M8 0.2 L15.8 13.8 L0.2 13.8 Z" fill="#ffd500"/><rect x="7" y="4" width="2" height="4.8" fill="#fff"/><rect x="7" y="10" width="2" height="2" fill="#fff"/></svg>
<div class="g" style="left:362px;top:561.5px;color:#e8a21e">&lt;Selektieren Sie ein Pers<span style="letter-spacing:-0.9px">...</span></div>
<div class="g gr" style="left:497px;top:561.5px;width:77px;text-align:right;color:#000">1'600.75</div>
<div class="g gc" style="left:577px;top:561.5px;width:59px;text-align:center;color:#000">CHF</div>
<svg class="ic" style="left:738px;top:562px" width="15" height="15" viewBox="0 0 15 15"><circle cx="7" cy="7" r="7" fill="#2f8fdb"/><rect x="6.1" y="3" width="1.9" height="1.5" fill="#e6eef6"/><path d="M5.2 5.6 H8 V10 H9 V11 H5 V10 H6 V6.6 H5.2 Z" fill="#e6eef6"/></svg>
<div class="g" style="left:758px;top:561.5px;width:141.8px;overflow:hidden;color:#e8a21e">Selektieren Sie ein Personenkonto</div>
<div class="a" style="left:0;top:594px;width:889px;height:1px;background:repeating-linear-gradient(90deg,#b4b4b4 0 1px,transparent 1px 2px)"></div>
<svg class="ic" style="left:3px;top:579px" width="15" height="15" viewBox="0 0 15 15"><defs><radialGradient id="gp" cx="50%" cy="35%" r="65%"><stop offset="0" stop-color="#a6d94a"/><stop offset="1" stop-color="#6cb21c"/></radialGradient></defs><circle cx="7.5" cy="7.5" r="7.3" fill="url(#gp)"/><path d="M5.4 3.9 L11.2 7.5 L5.4 11.1 Z" fill="#fff"/></svg>
<div class="g" style="left:24px;top:578.1px;color:#000">QR_SCOR_CHF_5_N_P_w_BI_multi_vat_cond_10_3.pdf</div>
<svg class="ic" style="left:340px;top:579px" width="16" height="15" viewBox="0 0 16 15"><path d="M8 0.2 L15.8 13.8 L0.2 13.8 Z" fill="#ffd500"/><rect x="7" y="4" width="2" height="4.8" fill="#fff"/><rect x="7" y="10" width="2" height="2" fill="#fff"/></svg>
<div class="g" style="left:362px;top:578.5px;color:#e8a21e">Lightning Fast Technolog<span style="letter-spacing:-0.9px">...</span></div>
<div class="g gr" style="left:497px;top:578.5px;width:77px;text-align:right;color:#000">5'000.00</div>
<div class="g gc" style="left:577px;top:578.5px;width:59px;text-align:center;color:#000">CHF</div>
<div class="g gc" style="left:637px;top:578.5px;width:99px;text-align:center;color:#000">10.11.2019</div>
<svg class="ic" style="left:738px;top:579px" width="15" height="15" viewBox="0 0 15 15"><circle cx="7" cy="7" r="7" fill="#2f8fdb"/><rect x="6.1" y="3" width="1.9" height="1.5" fill="#e6eef6"/><path d="M5.2 5.6 H8 V10 H9 V11 H5 V10 H6 V6.6 H5.2 Z" fill="#e6eef6"/></svg>
<div class="g" style="left:758px;top:578.5px;width:141.8px;overflow:hidden;color:#e8a21e">Kreditor 'Lightning Fast Technologies'</div>
<div class="a" style="left:0;top:611px;width:889px;height:1px;background:repeating-linear-gradient(90deg,#b4b4b4 0 1px,transparent 1px 2px)"></div>
<svg class="ic" style="left:3px;top:596px" width="15" height="15" viewBox="0 0 15 15"><defs><radialGradient id="gp" cx="50%" cy="35%" r="65%"><stop offset="0" stop-color="#a6d94a"/><stop offset="1" stop-color="#6cb21c"/></radialGradient></defs><circle cx="7.5" cy="7.5" r="7.3" fill="url(#gp)"/><path d="M5.4 3.9 L11.2 7.5 L5.4 11.1 Z" fill="#fff"/></svg>
<div class="g" style="left:24px;top:595.1px;color:#000">QR_SCOR_CHF_5_N_P_w_BI_multi_vat_cond_30_0.pdf</div>
<svg class="ic" style="left:340px;top:596px" width="16" height="15" viewBox="0 0 16 15"><path d="M8 0.2 L15.8 13.8 L0.2 13.8 Z" fill="#ffd500"/><rect x="7" y="4" width="2" height="4.8" fill="#fff"/><rect x="7" y="10" width="2" height="2" fill="#fff"/></svg>
<div class="g" style="left:362px;top:595.5px;color:#e8a21e">Lightning Fast Technolog<span style="letter-spacing:-0.9px">...</span></div>
<div class="g gr" style="left:497px;top:595.5px;width:77px;text-align:right;color:#000">5'000.00</div>
<div class="g gc" style="left:577px;top:595.5px;width:59px;text-align:center;color:#000">CHF</div>
<div class="g gc" style="left:637px;top:595.5px;width:99px;text-align:center;color:#000">10.11.2019</div>
<svg class="ic" style="left:738px;top:596px" width="15" height="15" viewBox="0 0 15 15"><circle cx="7" cy="7" r="7" fill="#2f8fdb"/><rect x="6.1" y="3" width="1.9" height="1.5" fill="#e6eef6"/><path d="M5.2 5.6 H8 V10 H9 V11 H5 V10 H6 V6.6 H5.2 Z" fill="#e6eef6"/></svg>
<div class="g" style="left:758px;top:595.5px;width:141.8px;overflow:hidden;color:#e8a21e">Kreditor 'Lightning Fast Technologies'</div>
<div class="a" style="left:0;top:628px;width:889px;height:1px;background:repeating-linear-gradient(90deg,#b4b4b4 0 1px,transparent 1px 2px)"></div>
<svg class="ic" style="left:3px;top:613px" width="15" height="15" viewBox="0 0 15 15"><defs><radialGradient id="gp" cx="50%" cy="35%" r="65%"><stop offset="0" stop-color="#a6d94a"/><stop offset="1" stop-color="#6cb21c"/></radialGradient></defs><circle cx="7.5" cy="7.5" r="7.3" fill="url(#gp)"/><path d="M5.4 3.9 L11.2 7.5 L5.4 11.1 Z" fill="#fff"/></svg>
<div class="g" style="left:24px;top:612.1px;color:#000">QR_SCOR_CHF_5_N_P_w_BI_single_vat_cond_30_0.pdf</div>
<svg class="ic" style="left:340px;top:613px" width="16" height="15" viewBox="0 0 16 15"><path d="M8 0.2 L15.8 13.8 L0.2 13.8 Z" fill="#ffd500"/><rect x="7" y="4" width="2" height="4.8" fill="#fff"/><rect x="7" y="10" width="2" height="2" fill="#fff"/></svg>
<div class="g" style="left:362px;top:612.5px;color:#e8a21e">Lightning Fast Technolog<span style="letter-spacing:-0.9px">...</span></div>
<div class="g gr" style="left:497px;top:612.5px;width:77px;text-align:right;color:#000">5'000.00</div>
<div class="g gc" style="left:577px;top:612.5px;width:59px;text-align:center;color:#000">CHF</div>
<div class="g gc" style="left:637px;top:612.5px;width:99px;text-align:center;color:#000">10.11.2019</div>
<svg class="ic" style="left:738px;top:613px" width="15" height="15" viewBox="0 0 15 15"><circle cx="7" cy="7" r="7" fill="#2f8fdb"/><rect x="6.1" y="3" width="1.9" height="1.5" fill="#e6eef6"/><path d="M5.2 5.6 H8 V10 H9 V11 H5 V10 H6 V6.6 H5.2 Z" fill="#e6eef6"/></svg>
<div class="g" style="left:758px;top:612.5px;width:141.8px;overflow:hidden;color:#e8a21e">Kreditor 'Lightning Fast Technologies'</div>
<div class="a" style="left:0;top:645px;width:889px;height:1px;background:repeating-linear-gradient(90deg,#b4b4b4 0 1px,transparent 1px 2px)"></div>
<svg class="ic" style="left:3px;top:630px" width="15" height="15" viewBox="0 0 15 15"><defs><radialGradient id="gp" cx="50%" cy="35%" r="65%"><stop offset="0" stop-color="#a6d94a"/><stop offset="1" stop-color="#6cb21c"/></radialGradient></defs><circle cx="7.5" cy="7.5" r="7.3" fill="url(#gp)"/><path d="M5.4 3.9 L11.2 7.5 L5.4 11.1 Z" fill="#fff"/></svg>
<div class="g" style="left:24px;top:629.1px;color:#000">QR_SCOR_CHF_5_N_P_wo_BI.pdf</div>
<svg class="ic" style="left:340px;top:630px" width="16" height="15" viewBox="0 0 16 15"><path d="M8 0.2 L15.8 13.8 L0.2 13.8 Z" fill="#ffd500"/><rect x="7" y="4" width="2" height="4.8" fill="#fff"/><rect x="7" y="10" width="2" height="2" fill="#fff"/></svg>
<div class="g" style="left:362px;top:629.5px;color:#e8a21e">Lightning Fast Technolog<span style="letter-spacing:-0.9px">...</span></div>
<div class="g gr" style="left:497px;top:629.5px;width:77px;text-align:right;color:#000">5'000.00</div>
<div class="g gc" style="left:577px;top:629.5px;width:59px;text-align:center;color:#000">CHF</div>
<svg class="ic" style="left:738px;top:630px" width="15" height="15" viewBox="0 0 15 15"><circle cx="7" cy="7" r="7" fill="#2f8fdb"/><rect x="6.1" y="3" width="1.9" height="1.5" fill="#e6eef6"/><path d="M5.2 5.6 H8 V10 H9 V11 H5 V10 H6 V6.6 H5.2 Z" fill="#e6eef6"/></svg>
<div class="g" style="left:758px;top:629.5px;width:141.8px;overflow:hidden;color:#e8a21e">Kreditor 'Lightning Fast Technologies'</div>
<div class="a" style="left:0;top:662px;width:889px;height:1px;background:repeating-linear-gradient(90deg,#b4b4b4 0 1px,transparent 1px 2px)"></div>
<svg class="ic" style="left:3px;top:647px" width="15" height="15" viewBox="0 0 15 15"><defs><radialGradient id="gp" cx="50%" cy="35%" r="65%"><stop offset="0" stop-color="#a6d94a"/><stop offset="1" stop-color="#6cb21c"/></radialGradient></defs><circle cx="7.5" cy="7.5" r="7.3" fill="url(#gp)"/><path d="M5.4 3.9 L11.2 7.5 L5.4 11.1 Z" fill="#fff"/></svg>
<div class="g" style="left:24px;top:646.1px;color:#000">QR_SCOR_EUR_6_E_P_w_BI_multi_vat_cond_10_3.pdf</div>
<svg class="ic" style="left:340px;top:647px" width="16" height="15" viewBox="0 0 16 15"><path d="M8 0.2 L15.8 13.8 L0.2 13.8 Z" fill="#ffd500"/><rect x="7" y="4" width="2" height="4.8" fill="#fff"/><rect x="7" y="10" width="2" height="2" fill="#fff"/></svg>
<div class="g" style="left:362px;top:646.5px;color:#e8a21e">Pay.PF</div>
<div class="g gr" style="left:497px;top:646.5px;width:77px;text-align:right;color:#000">5'000.00</div>
<div class="g gc" style="left:577px;top:646.5px;width:59px;text-align:center;color:#000">EUR</div>
<div class="g gc" style="left:637px;top:646.5px;width:99px;text-align:center;color:#000">10.11.2019</div>
<svg class="ic" style="left:738px;top:647px" width="15" height="15" viewBox="0 0 15 15"><circle cx="7" cy="7" r="7" fill="#2f8fdb"/><rect x="6.1" y="3" width="1.9" height="1.5" fill="#e6eef6"/><path d="M5.2 5.6 H8 V10 H9 V11 H5 V10 H6 V6.6 H5.2 Z" fill="#e6eef6"/></svg>
<div class="g" style="left:758px;top:646.5px;width:141.8px;overflow:hidden;color:#e8a21e">Keine Transaktionsmethode</div>
<div class="a" style="left:0;top:679px;width:889px;height:1px;background:repeating-linear-gradient(90deg,#b4b4b4 0 1px,transparent 1px 2px)"></div>
<svg class="ic" style="left:3px;top:664px" width="15" height="15" viewBox="0 0 15 15"><defs><radialGradient id="gp" cx="50%" cy="35%" r="65%"><stop offset="0" stop-color="#a6d94a"/><stop offset="1" stop-color="#6cb21c"/></radialGradient></defs><circle cx="7.5" cy="7.5" r="7.3" fill="url(#gp)"/><path d="M5.4 3.9 L11.2 7.5 L5.4 11.1 Z" fill="#fff"/></svg>
<div class="g" style="left:24px;top:663.1px;color:#000">QR_SCOR_EUR_6_E_P_w_BI_multi_vat_cond_30_0.pdf</div>
<svg class="ic" style="left:340px;top:664px" width="16" height="15" viewBox="0 0 16 15"><path d="M8 0.2 L15.8 13.8 L0.2 13.8 Z" fill="#ffd500"/><rect x="7" y="4" width="2" height="4.8" fill="#fff"/><rect x="7" y="10" width="2" height="2" fill="#fff"/></svg>
<div class="g" style="left:362px;top:663.5px;color:#e8a21e">Pay.PF</div>
<div class="g gr" style="left:497px;top:663.5px;width:77px;text-align:right;color:#000">5'000.00</div>
<div class="g gc" style="left:577px;top:663.5px;width:59px;text-align:center;color:#000">EUR</div>
<div class="g gc" style="left:637px;top:663.5px;width:99px;text-align:center;color:#000">10.11.2019</div>
<svg class="ic" style="left:738px;top:664px" width="15" height="15" viewBox="0 0 15 15"><circle cx="7" cy="7" r="7" fill="#2f8fdb"/><rect x="6.1" y="3" width="1.9" height="1.5" fill="#e6eef6"/><path d="M5.2 5.6 H8 V10 H9 V11 H5 V10 H6 V6.6 H5.2 Z" fill="#e6eef6"/></svg>
<div class="g" style="left:758px;top:663.5px;width:141.8px;overflow:hidden;color:#e8a21e">Keine Transaktionsmethode</div>
<div class="a" style="left:20px;top:0;width:1px;height:690px;background:repeating-linear-gradient(180deg,#b4b4b4 0 1px,transparent 1px 2px)"></div>
<div class="a" style="left:338px;top:0;width:1px;height:690px;background:repeating-linear-gradient(180deg,#b4b4b4 0 1px,transparent 1px 2px)"></div>
<div class="a" style="left:358px;top:0;width:1px;height:690px;background:repeating-linear-gradient(180deg,#b4b4b4 0 1px,transparent 1px 2px)"></div>
<div class="a" style="left:496px;top:0;width:1px;height:690px;background:repeating-linear-gradient(180deg,#b4b4b4 0 1px,transparent 1px 2px)"></div>
<div class="a" style="left:576px;top:0;width:1px;height:690px;background:repeating-linear-gradient(180deg,#b4b4b4 0 1px,transparent 1px 2px)"></div>
<div class="a" style="left:636px;top:0;width:1px;height:690px;background:repeating-linear-gradient(180deg,#b4b4b4 0 1px,transparent 1px 2px)"></div>
<div class="a" style="left:736px;top:0;width:1px;height:690px;background:repeating-linear-gradient(180deg,#b4b4b4 0 1px,transparent 1px 2px)"></div>
<div class="a" style="left:754px;top:0;width:1px;height:690px;background:repeating-linear-gradient(180deg,#b4b4b4 0 1px,transparent 1px 2px)"></div>
</div>
<div class="a" style="left:901px;top:67px;width:16px;height:724px;background:#f0f0f0"></div>
<div class="a" style="left:901px;top:84px;width:16px;height:476px;background:#cdcdcd"></div>
<svg class="ic" style="left:905px;top:72px" width="8" height="6" viewBox="0 0 8 6"><path d="M1 5 L4 2 L7 5" stroke="#606060" stroke-width="1.8" fill="none"/></svg>
<svg class="ic" style="left:905px;top:780px" width="8" height="6" viewBox="0 0 8 6"><path d="M1 1 L4 4 L7 1" stroke="#606060" stroke-width="1.8" fill="none"/></svg>
<div class="a" style="left:12px;top:775px;width:889px;height:16px;background:#f0f0f0"></div>
<div class="a" style="left:29px;top:775px;width:783px;height:16px;background:#cdcdcd"></div>
<svg class="ic" style="left:17px;top:779px" width="6" height="8" viewBox="0 0 6 8"><path d="M5 1 L2 4 L5 7" stroke="#606060" stroke-width="1.8" fill="none"/></svg>
<svg class="ic" style="left:889px;top:779px" width="6" height="8" viewBox="0 0 6 8"><path d="M1 1 L4 4 L1 7" stroke="#606060" stroke-width="1.8" fill="none"/></svg>
<div class="a" style="left:922px;top:66px;width:638px;height:726px;border:1px solid #6d6d6d"></div>
<div class="a" style="left:1455px;top:72px;width:30px;height:30px;background:#e1e1e1;border:1px solid #adadad"></div>
<svg class="ic" style="left:1455px;top:72px" width="30" height="30" viewBox="0 0 30 30"><circle cx="13.75" cy="13.75" r="7.4" stroke="#000" stroke-width="2.7" fill="none"/><path d="M13.75 10.3 V17.2 M10.3 13.75 H17.2" stroke="#000" stroke-width="2.6"/><path d="M19.6 19.4 L23.6 23.4" stroke="#000" stroke-width="3.2" stroke-linecap="round"/></svg>
<div class="a" style="left:1489px;top:72px;width:30px;height:30px;background:#e1e1e1;border:1px solid #adadad"></div>
<svg class="ic" style="left:1489px;top:72px" width="30" height="30" viewBox="0 0 30 30"><circle cx="13.75" cy="13.75" r="7.4" stroke="#000" stroke-width="2.7" fill="none"/><path d="M10.3 13.75 H17.2" stroke="#000" stroke-width="2.6"/><path d="M19.6 19.4 L23.6 23.4" stroke="#000" stroke-width="3.2" stroke-linecap="round"/></svg>
<div class="a" style="left:1523px;top:72px;width:30px;height:30px;background:#e1e1e1;border:1px solid #adadad"></div>
<svg class="ic" style="left:1523px;top:72px" width="30" height="30" viewBox="0 0 30 30"><defs><linearGradient id="pr" x1="0" y1="0" x2="1" y2="0"><stop offset="0" stop-color="#8294b4"/><stop offset="0.2" stop-color="#c3ccdc"/><stop offset="0.45" stop-color="#f4f5f8"/><stop offset="1" stop-color="#dde2ea"/></linearGradient><linearGradient id="pp" x1="0" y1="0" x2="1" y2="1"><stop offset="0" stop-color="#d4eefc"/><stop offset="1" stop-color="#f4faff"/></linearGradient><linearGradient id="pt" x1="0" y1="0" x2="0" y2="1"><stop offset="0" stop-color="#c9e9fa"/><stop offset="1" stop-color="#8fcdf0"/></linearGradient></defs><path d="M3 14 Q3 10.6 6.5 10.6 L24 10.6 Q27 11.5 27 15 L27 26.4 L3.2 26.4 Z" fill="url(#pr)" stroke="#9aa6ba" stroke-width="0.5"/><path d="M6 3 L19.3 2.9 L20.8 11.8 L7.3 12.2 Z" fill="url(#pp)" stroke="#6fb6e4" stroke-width="0.7"/><path d="M3.2 13 Q4 11 6 11 L8.6 11 L8.6 26.4 L3.2 26.4 Z" fill="#7f8fae" opacity="0.7"/><circle cx="18" cy="16.2" r="1.5" fill="#2fc21f"/><path d="M10.8 21.8 Q12 20.6 14 20.6 L25 20.4 Q27 20.8 27 23 L26.6 25.6 L12 25.8 Q10.8 25.2 10.8 24 Z" fill="url(#pt)" stroke="#5eaee0" stroke-width="0.6"/></svg>
<div class="a" style="left:994px;top:107px;width:453px;height:641px;background:#fff;overflow:hidden">
<div class="a" style="left:0;top:414px;width:453px;height:1px;background:#9a9a9a"></div><div class="a" style="left:133px;top:414px;width:1px;height:227px;background:#9a9a9a"></div><svg class="ic" style="left:435px;top:410px;transform:scaleX(-1)" width="8" height="8" viewBox="0 0 10 10"><circle cx="2" cy="2" r="1.4" fill="none" stroke="#222" stroke-width="0.9"/><circle cx="2" cy="8" r="1.4" fill="none" stroke="#222" stroke-width="0.9"/><path d="M3.2 2.8 L9 7.5 M3.2 7.2 L9 2.5" stroke="#222" stroke-width="0.9"/></svg><svg class="ic" style="left:129px;top:623px;transform:rotate(-90deg)" width="8" height="8" viewBox="0 0 10 10"><circle cx="2" cy="2" r="1.4" fill="none" stroke="#222" stroke-width="0.9"/><circle cx="2" cy="8" r="1.4" fill="none" stroke="#222" stroke-width="0.9"/><path d="M3.2 2.8 L9 7.5 M3.2 7.2 L9 2.5" stroke="#222" stroke-width="0.9"/></svg><div class="t" style="left:210.5px;top:408.62px;font-size:4.7px;line-height:4.7px;font-weight:400;">qr-rechnung.net</div><div class="t" style="left:11px;top:424.57px;font-size:8.3px;line-height:8.3px;font-weight:700;">Receipt</div><div class="t" style="left:11px;top:444.04px;font-size:4.8px;line-height:4.8px;font-weight:700;">Account / Payable to</div><div class="t" style="left:11px;top:448.52px;font-size:6px;line-height:6px;font-weight:400;">CH44 3199 9123 0008 8901 2</div><div class="t" style="left:11px;top:455.32px;font-size:6px;line-height:6px;font-weight:400;">Street Food Technologies</div><div class="t" style="left:11px;top:462.32px;font-size:6px;line-height:6px;font-weight:400;">Food Street 10</div><div class="t" style="left:11px;top:469.32px;font-size:6px;line-height:6px;font-weight:400;">8000 Z&uuml;rich</div><div class="t" style="left:11px;top:485.44px;font-size:4.8px;line-height:4.8px;font-weight:700;">Reference</div><div class="t" style="left:11px;top:489.32px;font-size:6px;line-height:6px;font-weight:400;">21 00000 00003 13947 14300 09017</div><div class="t" style="left:11px;top:505.94px;font-size:4.8px;line-height:4.8px;font-weight:700;">Payable by</div><div class="t" style="left:11px;top:510.22px;font-size:6px;line-height:6px;font-weight:400;">Topal_ISO20022_T</div><div class="t" style="left:11px;top:517.22px;font-size:6px;line-height:6px;font-weight:400;">ISO20022 Street 10</div><div class="t" style="left:11px;top:523.82px;font-size:6px;line-height:6px;font-weight:400;">80 Z&uuml;rich</div><div class="t" style="left:11px;top:565.54px;font-size:4.8px;line-height:4.8px;font-weight:700;">Currency</div><div class="t" style="left:58.5px;top:565.54px;font-size:4.8px;line-height:4.8px;font-weight:700;">Amount</div><div class="t" style="left:11px;top:570.52px;font-size:6px;line-height:6px;font-weight:400;">CHF</div><div class="t" style="left:58.5px;top:570.52px;font-size:6px;line-height:6px;font-weight:400;">5 000.00</div><div class="t" style="left:85px;top:595.44px;font-size:4.8px;line-height:4.8px;font-weight:700;">Acceptance point</div><div class="t" style="left:144px;top:424.77px;font-size:8.3px;line-height:8.3px;font-weight:700;">Payment part</div><svg class="ic" style="left:144px;top:450px" width="100" height="100" viewBox="0 0 73 73" shape-rendering="auto"><path d="M0 0h7v1h-7zM8 0h2v1h-2zM11 0h1v1h-1zM13 0h2v1h-2zM16 0h5v1h-5zM22 0h2v1h-2zM27 0h1v1h-1zM29 0h1v1h-1zM31 0h4v1h-4zM36 0h1v1h-1zM39 0h1v1h-1zM41 0h3v1h-3zM45 0h2v1h-2zM48 0h2v1h-2zM52 0h1v1h-1zM57 0h1v1h-1zM59 0h2v1h-2zM62 0h3v1h-3zM66 0h7v1h-7zM0 1h1v1h-1zM6 1h1v1h-1zM12 1h1v1h-1zM16 1h1v1h-1zM19 1h1v1h-1zM21 1h1v1h-1zM26 1h2v1h-2zM29 1h5v1h-5zM35 1h3v1h-3zM39 1h2v1h-2zM45 1h3v1h-3zM50 1h5v1h-5zM56 1h4v1h-4zM66 1h1v1h-1zM72 1h1v1h-1zM0 2h1v1h-1zM2 2h3v1h-3zM6 2h1v1h-1zM9 2h1v1h-1zM14 2h3v1h-3zM18 2h11v1h-11zM31 2h5v1h-5zM38 2h6v1h-6zM45 2h2v1h-2zM49 2h1v1h-1zM51 2h1v1h-1zM56 2h3v1h-3zM62 2h2v1h-2zM66 2h1v1h-1zM68 2h3v1h-3zM72 2h1v1h-1zM0 3h1v1h-1zM2 3h3v1h-3zM6 3h1v1h-1zM13 3h1v1h-1zM15 3h5v1h-5zM22 3h1v1h-1zM26 3h5v1h-5zM34 3h1v1h-1zM37 3h1v1h-1zM42 3h2v1h-2zM45 3h1v1h-1zM48 3h2v1h-2zM52 3h3v1h-3zM57 3h1v1h-1zM61 3h1v1h-1zM63 3h2v1h-2zM66 3h1v1h-1zM68 3h3v1h-3zM72 3h1v1h-1zM0 4h1v1h-1zM2 4h3v1h-3zM6 4h1v1h-1zM12 4h1v1h-1zM15 4h4v1h-4zM20 4h3v1h-3zM24 4h7v1h-7zM33 4h1v1h-1zM38 4h4v1h-4zM43 4h7v1h-7zM52 4h1v1h-1zM56 4h1v1h-1zM58 4h2v1h-2zM66 4h1v1h-1zM68 4h3v1h-3zM72 4h1v1h-1zM0 5h1v1h-1zM6 5h1v1h-1zM8 5h1v1h-1zM13 5h1v1h-1zM15 5h1v1h-1zM20 5h1v1h-1zM24 5h1v1h-1zM28 5h7v1h-7zM38 5h1v1h-1zM41 5h1v1h-1zM44 5h1v1h-1zM48 5h2v1h-2zM51 5h2v1h-2zM55 5h2v1h-2zM58 5h3v1h-3zM62 5h1v1h-1zM64 5h1v1h-1zM66 5h1v1h-1zM72 5h1v1h-1zM0 6h7v1h-7zM8 6h1v1h-1zM10 6h1v1h-1zM12 6h1v1h-1zM14 6h1v1h-1zM16 6h1v1h-1zM18 6h1v1h-1zM20 6h1v1h-1zM22 6h1v1h-1zM24 6h1v1h-1zM26 6h1v1h-1zM28 6h1v1h-1zM30 6h1v1h-1zM32 6h1v1h-1zM34 6h1v1h-1zM36 6h1v1h-1zM38 6h1v1h-1zM40 6h1v1h-1zM42 6h1v1h-1zM44 6h1v1h-1zM46 6h1v1h-1zM48 6h1v1h-1zM50 6h1v1h-1zM52 6h1v1h-1zM54 6h1v1h-1zM56 6h1v1h-1zM58 6h1v1h-1zM60 6h1v1h-1zM62 6h1v1h-1zM64 6h1v1h-1zM66 6h7v1h-7zM8 7h2v1h-2zM12 7h1v1h-1zM16 7h3v1h-3zM20 7h3v1h-3zM24 7h1v1h-1zM28 7h1v1h-1zM30 7h2v1h-2zM35 7h2v1h-2zM38 7h2v1h-2zM43 7h2v1h-2zM48 7h1v1h-1zM50 7h1v1h-1zM52 7h2v1h-2zM56 7h2v1h-2zM59 7h6v1h-6zM0 8h1v1h-1zM2 8h1v1h-1zM4 8h6v1h-6zM12 8h2v1h-2zM15 8h1v1h-1zM17 8h2v1h-2zM20 8h1v1h-1zM24 8h6v1h-6zM33 8h5v1h-5zM39 8h3v1h-3zM44 8h5v1h-5zM50 8h7v1h-7zM60 8h1v1h-1zM62 8h5v1h-5zM68 8h1v1h-1zM70 8h3v1h-3zM0 9h5v1h-5zM12 9h2v1h-2zM15 9h1v1h-1zM18 9h1v1h-1zM24 9h1v1h-1zM34 9h5v1h-5zM44 9h2v1h-2zM51 9h1v1h-1zM53 9h3v1h-3zM57 9h1v1h-1zM60 9h3v1h-3zM67 9h3v1h-3zM71 9h1v1h-1zM0 10h3v1h-3zM6 10h2v1h-2zM9 10h3v1h-3zM13 10h1v1h-1zM16 10h2v1h-2zM20 10h3v1h-3zM24 10h1v1h-1zM26 10h1v1h-1zM29 10h1v1h-1zM34 10h1v1h-1zM36 10h9v1h-9zM46 10h1v1h-1zM49 10h1v1h-1zM53 10h3v1h-3zM58 10h5v1h-5zM64 10h1v1h-1zM66 10h2v1h-2zM69 10h2v1h-2zM7 11h1v1h-1zM9 11h1v1h-1zM12 11h2v1h-2zM15 11h4v1h-4zM21 11h1v1h-1zM23 11h1v1h-1zM25 11h4v1h-4zM30 11h2v1h-2zM34 11h8v1h-8zM45 11h2v1h-2zM48 11h4v1h-4zM53 11h1v1h-1zM57 11h5v1h-5zM65 11h2v1h-2zM69 11h1v1h-1zM71 11h2v1h-2zM4 12h4v1h-4zM14 12h1v1h-1zM16 12h1v1h-1zM18 12h1v1h-1zM21 12h3v1h-3zM26 12h2v1h-2zM30 12h2v1h-2zM33 12h3v1h-3zM39 12h3v1h-3zM44 12h3v1h-3zM48 12h2v1h-2zM52 12h4v1h-4zM57 12h1v1h-1zM61 12h1v1h-1zM63 12h1v1h-1zM65 12h2v1h-2zM68 12h1v1h-1zM70 12h3v1h-3zM0 13h1v1h-1zM3 13h3v1h-3zM8 13h4v1h-4zM17 13h2v1h-2zM21 13h1v1h-1zM23 13h7v1h-7zM31 13h1v1h-1zM33 13h2v1h-2zM37 13h4v1h-4zM42 13h2v1h-2zM45 13h2v1h-2zM49 13h3v1h-3zM53 13h1v1h-1zM56 13h2v1h-2zM60 13h1v1h-1zM62 13h3v1h-3zM69 13h3v1h-3zM1 14h4v1h-4zM6 14h2v1h-2zM13 14h3v1h-3zM17 14h2v1h-2zM20 14h3v1h-3zM24 14h1v1h-1zM28 14h4v1h-4zM33 14h3v1h-3zM41 14h1v1h-1zM43 14h1v1h-1zM45 14h1v1h-1zM47 14h4v1h-4zM53 14h2v1h-2zM57 14h1v1h-1zM61 14h2v1h-2zM66 14h4v1h-4zM0 15h1v1h-1zM2 15h2v1h-2zM7 15h1v1h-1zM10 15h5v1h-5zM17 15h3v1h-3zM21 15h3v1h-3zM26 15h3v1h-3zM31 15h2v1h-2zM34 15h3v1h-3zM38 15h1v1h-1zM40 15h2v1h-2zM44 15h2v1h-2zM47 15h2v1h-2zM50 15h1v1h-1zM52 15h1v1h-1zM54 15h3v1h-3zM60 15h1v1h-1zM62 15h1v1h-1zM64 15h2v1h-2zM68 15h2v1h-2zM72 15h1v1h-1zM0 16h1v1h-1zM3 16h2v1h-2zM6 16h2v1h-2zM11 16h1v1h-1zM13 16h2v1h-2zM17 16h3v1h-3zM21 16h3v1h-3zM26 16h1v1h-1zM29 16h1v1h-1zM31 16h1v1h-1zM35 16h2v1h-2zM38 16h1v1h-1zM40 16h3v1h-3zM44 16h2v1h-2zM48 16h8v1h-8zM57 16h1v1h-1zM59 16h1v1h-1zM63 16h1v1h-1zM65 16h1v1h-1zM67 16h1v1h-1zM72 16h1v1h-1zM1 17h1v1h-1zM4 17h1v1h-1zM8 17h2v1h-2zM11 17h1v1h-1zM13 17h1v1h-1zM15 17h1v1h-1zM18 17h2v1h-2zM21 17h4v1h-4zM28 17h1v1h-1zM30 17h1v1h-1zM33 17h1v1h-1zM38 17h1v1h-1zM41 17h1v1h-1zM43 17h1v1h-1zM46 17h1v1h-1zM48 17h2v1h-2zM51 17h1v1h-1zM53 17h1v1h-1zM58 17h4v1h-4zM63 17h1v1h-1zM66 17h2v1h-2zM69 17h4v1h-4zM0 18h2v1h-2zM4 18h1v1h-1zM6 18h3v1h-3zM10 18h3v1h-3zM16 18h3v1h-3zM21 18h1v1h-1zM23 18h1v1h-1zM26 18h1v1h-1zM28 18h1v1h-1zM30 18h3v1h-3zM34 18h1v1h-1zM37 18h2v1h-2zM43 18h4v1h-4zM50 18h1v1h-1zM53 18h1v1h-1zM55 18h6v1h-6zM65 18h1v1h-1zM67 18h1v1h-1zM70 18h1v1h-1zM0 19h1v1h-1zM2 19h3v1h-3zM9 19h1v1h-1zM11 19h2v1h-2zM18 19h1v1h-1zM22 19h1v1h-1zM25 19h2v1h-2zM28 19h1v1h-1zM30 19h3v1h-3zM34 19h4v1h-4zM42 19h1v1h-1zM44 19h1v1h-1zM48 19h1v1h-1zM52 19h4v1h-4zM61 19h3v1h-3zM65 19h6v1h-6zM72 19h1v1h-1zM0 20h1v1h-1zM5 20h4v1h-4zM10 20h1v1h-1zM13 20h1v1h-1zM15 20h1v1h-1zM17 20h3v1h-3zM22 20h3v1h-3zM26 20h3v1h-3zM30 20h1v1h-1zM32 20h2v1h-2zM35 20h2v1h-2zM38 20h1v1h-1zM43 20h3v1h-3zM47 20h1v1h-1zM49 20h3v1h-3zM54 20h1v1h-1zM56 20h2v1h-2zM62 20h3v1h-3zM68 20h2v1h-2zM72 20h1v1h-1zM0 21h1v1h-1zM2 21h3v1h-3zM8 21h4v1h-4zM13 21h3v1h-3zM18 21h1v1h-1zM20 21h2v1h-2zM25 21h2v1h-2zM28 21h5v1h-5zM37 21h2v1h-2zM40 21h1v1h-1zM43 21h1v1h-1zM46 21h2v1h-2zM55 21h2v1h-2zM58 21h2v1h-2zM63 21h3v1h-3zM67 21h1v1h-1zM70 21h1v1h-1zM0 22h2v1h-2zM3 22h1v1h-1zM5 22h2v1h-2zM10 22h1v1h-1zM18 22h1v1h-1zM20 22h1v1h-1zM22 22h1v1h-1zM24 22h1v1h-1zM26 22h7v1h-7zM34 22h3v1h-3zM40 22h1v1h-1zM42 22h3v1h-3zM48 22h1v1h-1zM50 22h1v1h-1zM52 22h1v1h-1zM56 22h2v1h-2zM59 22h1v1h-1zM61 22h1v1h-1zM63 22h6v1h-6zM70 22h3v1h-3zM0 23h2v1h-2zM4 23h1v1h-1zM8 23h1v1h-1zM12 23h1v1h-1zM15 23h2v1h-2zM19 23h4v1h-4zM24 23h2v1h-2zM28 23h1v1h-1zM36 23h1v1h-1zM40 23h1v1h-1zM43 23h9v1h-9zM54 23h1v1h-1zM56 23h1v1h-1zM60 23h2v1h-2zM63 23h1v1h-1zM66 23h1v1h-1zM70 23h1v1h-1zM0 24h1v1h-1zM2 24h1v1h-1zM4 24h5v1h-5zM10 24h1v1h-1zM12 24h2v1h-2zM16 24h3v1h-3zM21 24h1v1h-1zM23 24h6v1h-6zM30 24h1v1h-1zM35 24h3v1h-3zM41 24h1v1h-1zM44 24h5v1h-5zM50 24h4v1h-4zM64 24h5v1h-5zM70 24h1v1h-1zM72 24h1v1h-1zM1 25h4v1h-4zM8 25h1v1h-1zM12 25h1v1h-1zM16 25h5v1h-5zM23 25h2v1h-2zM28 25h1v1h-1zM30 25h2v1h-2zM35 25h3v1h-3zM41 25h4v1h-4zM48 25h1v1h-1zM50 25h4v1h-4zM55 25h1v1h-1zM57 25h1v1h-1zM59 25h2v1h-2zM62 25h1v1h-1zM64 25h1v1h-1zM68 25h3v1h-3zM2 26h1v1h-1zM4 26h1v1h-1zM6 26h1v1h-1zM8 26h1v1h-1zM10 26h1v1h-1zM12 26h1v1h-1zM15 26h2v1h-2zM19 26h2v1h-2zM22 26h1v1h-1zM24 26h1v1h-1zM26 26h1v1h-1zM28 26h4v1h-4zM33 26h1v1h-1zM35 26h1v1h-1zM37 26h1v1h-1zM40 26h2v1h-2zM44 26h1v1h-1zM46 26h1v1h-1zM48 26h1v1h-1zM51 26h2v1h-2zM56 26h1v1h-1zM61 26h2v1h-2zM64 26h1v1h-1zM66 26h1v1h-1zM68 26h2v1h-2zM1 27h4v1h-4zM8 27h2v1h-2zM13 27h1v1h-1zM18 27h1v1h-1zM23 27h2v1h-2zM28 27h2v1h-2zM32 27h1v1h-1zM35 27h1v1h-1zM38 27h3v1h-3zM43 27h2v1h-2zM48 27h2v1h-2zM52 27h1v1h-1zM57 27h1v1h-1zM59 27h3v1h-3zM63 27h2v1h-2zM68 27h1v1h-1zM70 27h1v1h-1zM72 27h1v1h-1zM0 28h1v1h-1zM2 28h7v1h-7zM11 28h1v1h-1zM13 28h1v1h-1zM15 28h2v1h-2zM19 28h1v1h-1zM21 28h1v1h-1zM23 28h6v1h-6zM33 28h6v1h-6zM41 28h1v1h-1zM44 28h6v1h-6zM51 28h2v1h-2zM54 28h1v1h-1zM59 28h3v1h-3zM64 28h9v1h-9zM3 29h1v1h-1zM9 29h2v1h-2zM14 29h1v1h-1zM17 29h8v1h-8zM26 29h1v1h-1zM28 29h2v1h-2zM31 29h1v1h-1zM35 29h3v1h-3zM41 29h2v1h-2zM44 29h1v1h-1zM46 29h3v1h-3zM51 29h1v1h-1zM53 29h4v1h-4zM58 29h4v1h-4zM63 29h1v1h-1zM65 29h1v1h-1zM68 29h5v1h-5zM0 30h1v1h-1zM4 30h3v1h-3zM8 30h1v1h-1zM10 30h1v1h-1zM12 30h1v1h-1zM14 30h3v1h-3zM19 30h2v1h-2zM22 30h1v1h-1zM24 30h2v1h-2zM28 30h3v1h-3zM32 30h3v1h-3zM39 30h2v1h-2zM42 30h1v1h-1zM44 30h1v1h-1zM46 30h1v1h-1zM49 30h2v1h-2zM52 30h1v1h-1zM54 30h2v1h-2zM57 30h3v1h-3zM61 30h1v1h-1zM63 30h1v1h-1zM65 30h1v1h-1zM69 30h1v1h-1zM71 30h1v1h-1zM0 31h1v1h-1zM3 31h1v1h-1zM8 31h1v1h-1zM10 31h4v1h-4zM15 31h2v1h-2zM18 31h2v1h-2zM24 31h1v1h-1zM27 31h3v1h-3zM43 31h2v1h-2zM47 31h1v1h-1zM50 31h4v1h-4zM59 31h1v1h-1zM63 31h2v1h-2zM66 31h1v1h-1zM68 31h2v1h-2zM71 31h2v1h-2zM6 32h1v1h-1zM8 32h1v1h-1zM10 32h1v1h-1zM12 32h1v1h-1zM16 32h1v1h-1zM18 32h1v1h-1zM20 32h2v1h-2zM23 32h1v1h-1zM27 32h2v1h-2zM30 32h1v1h-1zM32 32h9v1h-9zM43 32h1v1h-1zM45 32h1v1h-1zM48 32h4v1h-4zM53 32h1v1h-1zM55 32h2v1h-2zM58 32h1v1h-1zM60 32h2v1h-2zM63 32h1v1h-1zM65 32h2v1h-2zM68 32h4v1h-4zM0 33h2v1h-2zM4 33h2v1h-2zM7 33h1v1h-1zM16 33h1v1h-1zM20 33h1v1h-1zM22 33h1v1h-1zM25 33h1v1h-1zM28 33h1v1h-1zM32 33h3v1h-3zM38 33h3v1h-3zM43 33h5v1h-5zM50 33h1v1h-1zM52 33h1v1h-1zM56 33h2v1h-2zM59 33h2v1h-2zM62 33h1v1h-1zM70 33h2v1h-2zM0 34h1v1h-1zM4 34h4v1h-4zM12 34h2v1h-2zM16 34h1v1h-1zM19 34h2v1h-2zM24 34h1v1h-1zM30 34h1v1h-1zM32 34h3v1h-3zM38 34h3v1h-3zM42 34h2v1h-2zM45 34h1v1h-1zM47 34h2v1h-2zM52 34h2v1h-2zM55 34h1v1h-1zM60 34h3v1h-3zM64 34h3v1h-3zM71 34h2v1h-2zM1 35h1v1h-1zM3 35h3v1h-3zM7 35h1v1h-1zM10 35h4v1h-4zM17 35h1v1h-1zM19 35h2v1h-2zM23 35h1v1h-1zM26 35h1v1h-1zM29 35h1v1h-1zM32 35h1v1h-1zM40 35h1v1h-1zM42 35h1v1h-1zM44 35h1v1h-1zM46 35h1v1h-1zM48 35h4v1h-4zM53 35h6v1h-6zM60 35h2v1h-2zM63 35h2v1h-2zM66 35h2v1h-2zM70 35h2v1h-2zM0 36h1v1h-1zM2 36h1v1h-1zM5 36h4v1h-4zM10 36h1v1h-1zM13 36h2v1h-2zM16 36h1v1h-1zM18 36h1v1h-1zM21 36h1v1h-1zM23 36h1v1h-1zM26 36h4v1h-4zM32 36h1v1h-1zM40 36h1v1h-1zM43 36h2v1h-2zM49 36h3v1h-3zM54 36h2v1h-2zM58 36h1v1h-1zM60 36h1v1h-1zM62 36h2v1h-2zM67 36h6v1h-6zM0 37h2v1h-2zM3 37h1v1h-1zM8 37h2v1h-2zM11 37h2v1h-2zM15 37h2v1h-2zM19 37h3v1h-3zM23 37h1v1h-1zM26 37h1v1h-1zM28 37h1v1h-1zM32 37h1v1h-1zM40 37h1v1h-1zM43 37h1v1h-1zM46 37h1v1h-1zM48 37h1v1h-1zM51 37h1v1h-1zM56 37h7v1h-7zM65 37h2v1h-2zM68 37h1v1h-1zM70 37h2v1h-2zM0 38h1v1h-1zM2 38h1v1h-1zM6 38h2v1h-2zM10 38h1v1h-1zM13 38h7v1h-7zM21 38h8v1h-8zM32 38h3v1h-3zM38 38h3v1h-3zM46 38h4v1h-4zM52 38h2v1h-2zM57 38h1v1h-1zM61 38h2v1h-2zM64 38h2v1h-2zM67 38h1v1h-1zM69 38h2v1h-2zM4 39h2v1h-2zM7 39h2v1h-2zM10 39h1v1h-1zM12 39h2v1h-2zM15 39h4v1h-4zM20 39h1v1h-1zM24 39h2v1h-2zM28 39h3v1h-3zM32 39h3v1h-3zM38 39h3v1h-3zM42 39h1v1h-1zM50 39h1v1h-1zM53 39h1v1h-1zM56 39h1v1h-1zM58 39h2v1h-2zM61 39h2v1h-2zM64 39h2v1h-2zM67 39h1v1h-1zM69 39h1v1h-1zM72 39h1v1h-1zM0 40h2v1h-2zM4 40h1v1h-1zM6 40h3v1h-3zM10 40h2v1h-2zM13 40h1v1h-1zM15 40h1v1h-1zM18 40h4v1h-4zM26 40h1v1h-1zM29 40h1v1h-1zM32 40h9v1h-9zM43 40h2v1h-2zM46 40h1v1h-1zM53 40h1v1h-1zM55 40h1v1h-1zM59 40h2v1h-2zM64 40h1v1h-1zM66 40h1v1h-1zM69 40h1v1h-1zM72 40h1v1h-1zM0 41h2v1h-2zM4 41h2v1h-2zM7 41h1v1h-1zM9 41h1v1h-1zM11 41h1v1h-1zM13 41h2v1h-2zM20 41h3v1h-3zM26 41h2v1h-2zM30 41h1v1h-1zM42 41h4v1h-4zM47 41h3v1h-3zM51 41h3v1h-3zM55 41h2v1h-2zM58 41h2v1h-2zM61 41h1v1h-1zM66 41h1v1h-1zM0 42h2v1h-2zM6 42h2v1h-2zM12 42h1v1h-1zM14 42h4v1h-4zM19 42h7v1h-7zM27 42h2v1h-2zM30 42h5v1h-5zM38 42h1v1h-1zM41 42h2v1h-2zM45 42h1v1h-1zM47 42h1v1h-1zM49 42h2v1h-2zM52 42h5v1h-5zM58 42h3v1h-3zM64 42h1v1h-1zM68 42h1v1h-1zM71 42h2v1h-2zM0 43h1v1h-1zM5 43h1v1h-1zM7 43h1v1h-1zM10 43h1v1h-1zM12 43h4v1h-4zM17 43h2v1h-2zM20 43h3v1h-3zM26 43h1v1h-1zM29 43h4v1h-4zM34 43h1v1h-1zM36 43h1v1h-1zM42 43h1v1h-1zM44 43h1v1h-1zM48 43h1v1h-1zM51 43h2v1h-2zM55 43h3v1h-3zM60 43h1v1h-1zM62 43h1v1h-1zM64 43h4v1h-4zM70 43h1v1h-1zM72 43h1v1h-1zM0 44h2v1h-2zM4 44h7v1h-7zM12 44h1v1h-1zM14 44h1v1h-1zM16 44h1v1h-1zM18 44h2v1h-2zM21 44h1v1h-1zM23 44h6v1h-6zM30 44h1v1h-1zM32 44h1v1h-1zM34 44h1v1h-1zM38 44h11v1h-11zM51 44h1v1h-1zM53 44h1v1h-1zM55 44h1v1h-1zM58 44h1v1h-1zM61 44h8v1h-8zM70 44h1v1h-1zM0 45h1v1h-1zM3 45h2v1h-2zM8 45h1v1h-1zM10 45h1v1h-1zM13 45h1v1h-1zM16 45h3v1h-3zM20 45h1v1h-1zM22 45h1v1h-1zM24 45h1v1h-1zM28 45h3v1h-3zM32 45h2v1h-2zM38 45h2v1h-2zM42 45h1v1h-1zM44 45h1v1h-1zM48 45h5v1h-5zM54 45h1v1h-1zM56 45h5v1h-5zM62 45h1v1h-1zM64 45h1v1h-1zM68 45h1v1h-1zM70 45h3v1h-3zM1 46h2v1h-2zM4 46h1v1h-1zM6 46h1v1h-1zM8 46h1v1h-1zM11 46h5v1h-5zM17 46h1v1h-1zM19 46h2v1h-2zM24 46h1v1h-1zM26 46h1v1h-1zM28 46h1v1h-1zM34 46h3v1h-3zM38 46h4v1h-4zM43 46h2v1h-2zM46 46h1v1h-1zM48 46h1v1h-1zM51 46h1v1h-1zM53 46h4v1h-4zM60 46h1v1h-1zM62 46h1v1h-1zM64 46h1v1h-1zM66 46h1v1h-1zM68 46h1v1h-1zM70 46h1v1h-1zM72 46h1v1h-1zM4 47h1v1h-1zM8 47h1v1h-1zM10 47h1v1h-1zM13 47h1v1h-1zM15 47h1v1h-1zM19 47h1v1h-1zM22 47h1v1h-1zM24 47h1v1h-1zM28 47h2v1h-2zM31 47h1v1h-1zM34 47h3v1h-3zM42 47h3v1h-3zM48 47h1v1h-1zM50 47h1v1h-1zM55 47h2v1h-2zM59 47h6v1h-6zM68 47h1v1h-1zM71 47h2v1h-2zM0 48h1v1h-1zM3 48h7v1h-7zM12 48h1v1h-1zM14 48h1v1h-1zM16 48h6v1h-6zM23 48h7v1h-7zM31 48h3v1h-3zM35 48h1v1h-1zM38 48h2v1h-2zM42 48h9v1h-9zM52 48h2v1h-2zM56 48h2v1h-2zM60 48h1v1h-1zM63 48h6v1h-6zM70 48h2v1h-2zM0 49h1v1h-1zM2 49h1v1h-1zM5 49h1v1h-1zM8 49h2v1h-2zM11 49h2v1h-2zM14 49h2v1h-2zM20 49h2v1h-2zM26 49h3v1h-3zM30 49h2v1h-2zM34 49h1v1h-1zM37 49h2v1h-2zM40 49h1v1h-1zM45 49h2v1h-2zM48 49h1v1h-1zM50 49h4v1h-4zM57 49h3v1h-3zM63 49h3v1h-3zM67 49h3v1h-3zM71 49h1v1h-1zM0 50h1v1h-1zM3 50h2v1h-2zM6 50h2v1h-2zM9 50h2v1h-2zM12 50h1v1h-1zM16 50h1v1h-1zM18 50h1v1h-1zM20 50h2v1h-2zM23 50h1v1h-1zM25 50h1v1h-1zM27 50h1v1h-1zM31 50h1v1h-1zM34 50h2v1h-2zM37 50h1v1h-1zM39 50h3v1h-3zM44 50h1v1h-1zM46 50h1v1h-1zM49 50h2v1h-2zM52 50h1v1h-1zM54 50h2v1h-2zM57 50h1v1h-1zM59 50h1v1h-1zM61 50h1v1h-1zM63 50h1v1h-1zM66 50h3v1h-3zM70 50h1v1h-1zM72 50h1v1h-1zM0 51h1v1h-1zM2 51h1v1h-1zM4 51h1v1h-1zM7 51h1v1h-1zM12 51h2v1h-2zM15 51h1v1h-1zM17 51h2v1h-2zM22 51h3v1h-3zM27 51h1v1h-1zM29 51h1v1h-1zM32 51h1v1h-1zM35 51h4v1h-4zM40 51h1v1h-1zM42 51h2v1h-2zM45 51h1v1h-1zM49 51h2v1h-2zM52 51h1v1h-1zM54 51h1v1h-1zM56 51h2v1h-2zM59 51h2v1h-2zM62 51h1v1h-1zM65 51h3v1h-3zM69 51h2v1h-2zM72 51h1v1h-1zM0 52h2v1h-2zM4 52h7v1h-7zM14 52h1v1h-1zM16 52h1v1h-1zM20 52h1v1h-1zM22 52h4v1h-4zM27 52h1v1h-1zM29 52h1v1h-1zM31 52h1v1h-1zM35 52h2v1h-2zM39 52h1v1h-1zM43 52h1v1h-1zM45 52h1v1h-1zM47 52h1v1h-1zM49 52h4v1h-4zM55 52h6v1h-6zM64 52h2v1h-2zM70 52h1v1h-1zM1 53h1v1h-1zM3 53h2v1h-2zM9 53h1v1h-1zM17 53h1v1h-1zM21 53h1v1h-1zM25 53h1v1h-1zM28 53h1v1h-1zM30 53h5v1h-5zM38 53h1v1h-1zM44 53h2v1h-2zM48 53h1v1h-1zM52 53h4v1h-4zM57 53h1v1h-1zM59 53h4v1h-4zM65 53h3v1h-3zM69 53h1v1h-1zM72 53h1v1h-1zM1 54h1v1h-1zM3 54h2v1h-2zM6 54h3v1h-3zM12 54h2v1h-2zM17 54h1v1h-1zM19 54h1v1h-1zM21 54h2v1h-2zM24 54h1v1h-1zM26 54h3v1h-3zM32 54h1v1h-1zM36 54h1v1h-1zM38 54h1v1h-1zM40 54h1v1h-1zM43 54h1v1h-1zM47 54h2v1h-2zM50 54h1v1h-1zM54 54h1v1h-1zM59 54h3v1h-3zM64 54h1v1h-1zM67 54h2v1h-2zM71 54h1v1h-1zM0 55h1v1h-1zM2 55h1v1h-1zM8 55h1v1h-1zM12 55h2v1h-2zM17 55h2v1h-2zM21 55h1v1h-1zM23 55h5v1h-5zM30 55h2v1h-2zM33 55h7v1h-7zM41 55h2v1h-2zM44 55h1v1h-1zM48 55h2v1h-2zM51 55h1v1h-1zM55 55h2v1h-2zM59 55h1v1h-1zM61 55h1v1h-1zM63 55h1v1h-1zM66 55h1v1h-1zM68 55h3v1h-3zM1 56h1v1h-1zM3 56h2v1h-2zM6 56h1v1h-1zM11 56h1v1h-1zM14 56h2v1h-2zM17 56h2v1h-2zM24 56h4v1h-4zM32 56h1v1h-1zM34 56h1v1h-1zM38 56h1v1h-1zM48 56h1v1h-1zM52 56h2v1h-2zM56 56h4v1h-4zM63 56h1v1h-1zM65 56h1v1h-1zM67 56h2v1h-2zM70 56h3v1h-3zM0 57h1v1h-1zM3 57h1v1h-1zM5 57h1v1h-1zM7 57h1v1h-1zM9 57h2v1h-2zM12 57h1v1h-1zM14 57h1v1h-1zM18 57h1v1h-1zM20 57h1v1h-1zM22 57h2v1h-2zM27 57h1v1h-1zM30 57h1v1h-1zM35 57h1v1h-1zM37 57h4v1h-4zM43 57h6v1h-6zM51 57h2v1h-2zM54 57h2v1h-2zM64 57h3v1h-3zM70 57h3v1h-3zM2 58h5v1h-5zM9 58h4v1h-4zM14 58h1v1h-1zM18 58h1v1h-1zM20 58h2v1h-2zM24 58h3v1h-3zM31 58h1v1h-1zM33 58h1v1h-1zM36 58h3v1h-3zM40 58h2v1h-2zM44 58h2v1h-2zM48 58h2v1h-2zM52 58h1v1h-1zM54 58h2v1h-2zM57 58h2v1h-2zM60 58h3v1h-3zM66 58h2v1h-2zM69 58h3v1h-3zM1 59h1v1h-1zM4 59h2v1h-2zM9 59h2v1h-2zM12 59h2v1h-2zM18 59h2v1h-2zM22 59h3v1h-3zM26 59h1v1h-1zM31 59h3v1h-3zM35 59h1v1h-1zM38 59h1v1h-1zM40 59h1v1h-1zM42 59h1v1h-1zM46 59h1v1h-1zM54 59h2v1h-2zM57 59h3v1h-3zM61 59h1v1h-1zM64 59h2v1h-2zM67 59h3v1h-3zM72 59h1v1h-1zM0 60h1v1h-1zM4 60h4v1h-4zM9 60h1v1h-1zM13 60h3v1h-3zM19 60h2v1h-2zM29 60h1v1h-1zM32 60h1v1h-1zM34 60h1v1h-1zM36 60h1v1h-1zM38 60h6v1h-6zM51 60h5v1h-5zM58 60h1v1h-1zM64 60h1v1h-1zM66 60h1v1h-1zM68 60h1v1h-1zM71 60h1v1h-1zM3 61h1v1h-1zM8 61h3v1h-3zM12 61h2v1h-2zM16 61h2v1h-2zM22 61h3v1h-3zM26 61h2v1h-2zM34 61h8v1h-8zM44 61h1v1h-1zM46 61h4v1h-4zM51 61h1v1h-1zM53 61h1v1h-1zM55 61h1v1h-1zM57 61h1v1h-1zM59 61h1v1h-1zM63 61h3v1h-3zM67 61h1v1h-1zM71 61h2v1h-2zM0 62h1v1h-1zM2 62h1v1h-1zM5 62h4v1h-4zM10 62h1v1h-1zM12 62h1v1h-1zM14 62h1v1h-1zM16 62h2v1h-2zM19 62h2v1h-2zM22 62h2v1h-2zM25 62h5v1h-5zM31 62h1v1h-1zM33 62h1v1h-1zM36 62h5v1h-5zM42 62h10v1h-10zM54 62h2v1h-2zM61 62h1v1h-1zM64 62h2v1h-2zM67 62h3v1h-3zM71 62h1v1h-1zM0 63h4v1h-4zM5 63h1v1h-1zM7 63h1v1h-1zM9 63h3v1h-3zM14 63h2v1h-2zM18 63h2v1h-2zM22 63h1v1h-1zM27 63h1v1h-1zM29 63h2v1h-2zM33 63h6v1h-6zM42 63h1v1h-1zM44 63h1v1h-1zM46 63h2v1h-2zM50 63h1v1h-1zM53 63h1v1h-1zM55 63h1v1h-1zM57 63h2v1h-2zM60 63h3v1h-3zM64 63h3v1h-3zM68 63h1v1h-1zM70 63h2v1h-2zM1 64h3v1h-3zM5 64h3v1h-3zM11 64h3v1h-3zM15 64h2v1h-2zM21 64h1v1h-1zM23 64h7v1h-7zM31 64h4v1h-4zM37 64h1v1h-1zM43 64h7v1h-7zM55 64h2v1h-2zM59 64h1v1h-1zM61 64h8v1h-8zM71 64h1v1h-1zM9 65h1v1h-1zM12 65h2v1h-2zM17 65h1v1h-1zM20 65h2v1h-2zM23 65h2v1h-2zM28 65h2v1h-2zM32 65h1v1h-1zM34 65h1v1h-1zM37 65h8v1h-8zM48 65h3v1h-3zM54 65h1v1h-1zM56 65h4v1h-4zM61 65h2v1h-2zM64 65h1v1h-1zM68 65h1v1h-1zM0 66h7v1h-7zM10 66h1v1h-1zM12 66h2v1h-2zM19 66h2v1h-2zM23 66h2v1h-2zM26 66h1v1h-1zM28 66h4v1h-4zM33 66h3v1h-3zM38 66h2v1h-2zM42 66h3v1h-3zM46 66h1v1h-1zM48 66h1v1h-1zM50 66h8v1h-8zM60 66h1v1h-1zM63 66h2v1h-2zM66 66h1v1h-1zM68 66h3v1h-3zM0 67h1v1h-1zM6 67h1v1h-1zM8 67h2v1h-2zM11 67h1v1h-1zM13 67h1v1h-1zM16 67h1v1h-1zM18 67h1v1h-1zM22 67h3v1h-3zM28 67h1v1h-1zM31 67h2v1h-2zM34 67h1v1h-1zM36 67h3v1h-3zM41 67h1v1h-1zM43 67h2v1h-2zM48 67h2v1h-2zM54 67h2v1h-2zM57 67h3v1h-3zM64 67h1v1h-1zM68 67h1v1h-1zM70 67h2v1h-2zM0 68h1v1h-1zM2 68h3v1h-3zM6 68h1v1h-1zM8 68h1v1h-1zM10 68h2v1h-2zM13 68h1v1h-1zM16 68h3v1h-3zM21 68h1v1h-1zM24 68h5v1h-5zM30 68h5v1h-5zM36 68h3v1h-3zM41 68h2v1h-2zM44 68h5v1h-5zM51 68h2v1h-2zM54 68h2v1h-2zM58 68h2v1h-2zM61 68h2v1h-2zM64 68h5v1h-5zM70 68h3v1h-3zM0 69h1v1h-1zM2 69h3v1h-3zM6 69h1v1h-1zM8 69h1v1h-1zM10 69h2v1h-2zM13 69h4v1h-4zM19 69h2v1h-2zM22 69h4v1h-4zM27 69h2v1h-2zM32 69h1v1h-1zM35 69h2v1h-2zM39 69h2v1h-2zM42 69h1v1h-1zM44 69h4v1h-4zM49 69h1v1h-1zM51 69h2v1h-2zM54 69h3v1h-3zM60 69h1v1h-1zM65 69h1v1h-1zM68 69h5v1h-5zM0 70h1v1h-1zM2 70h3v1h-3zM6 70h1v1h-1zM8 70h2v1h-2zM11 70h1v1h-1zM15 70h1v1h-1zM22 70h1v1h-1zM24 70h1v1h-1zM26 70h1v1h-1zM28 70h1v1h-1zM30 70h1v1h-1zM34 70h1v1h-1zM39 70h1v1h-1zM42 70h2v1h-2zM47 70h6v1h-6zM54 70h3v1h-3zM58 70h3v1h-3zM63 70h1v1h-1zM66 70h1v1h-1zM69 70h1v1h-1zM72 70h1v1h-1zM0 71h1v1h-1zM6 71h1v1h-1zM11 71h2v1h-2zM15 71h3v1h-3zM20 71h1v1h-1zM22 71h1v1h-1zM24 71h1v1h-1zM26 71h2v1h-2zM31 71h2v1h-2zM35 71h1v1h-1zM38 71h2v1h-2zM42 71h3v1h-3zM46 71h1v1h-1zM50 71h1v1h-1zM55 71h1v1h-1zM60 71h1v1h-1zM62 71h2v1h-2zM71 71h1v1h-1zM0 72h7v1h-7zM9 72h1v1h-1zM11 72h3v1h-3zM15 72h4v1h-4zM21 72h2v1h-2zM24 72h1v1h-1zM27 72h1v1h-1zM33 72h1v1h-1zM36 72h1v1h-1zM38 72h3v1h-3zM43 72h2v1h-2zM47 72h1v1h-1zM49 72h4v1h-4zM54 72h6v1h-6zM61 72h3v1h-3zM65 72h1v1h-1zM67 72h2v1h-2zM70 72h3v1h-3z" fill="#000"/></svg><div class="t" style="left:144px;top:562.54px;font-size:6.1px;line-height:6.1px;font-weight:700;">Currency</div><div class="t" style="left:192.29999999999995px;top:562.54px;font-size:6.1px;line-height:6.1px;font-weight:700;">Amount</div><div class="t" style="left:144px;top:569.45px;font-size:7.5px;line-height:7.5px;font-weight:400;">CHF</div><div class="t" style="left:192px;top:569.45px;font-size:7.5px;line-height:7.5px;font-weight:400;">5 000.00</div><div class="t" style="left:254.20000000000005px;top:426.64px;font-size:6.1px;line-height:6.1px;font-weight:700;">Account / Payable to</div><div class="t" style="left:254.20000000000005px;top:433.57px;font-size:7.6px;line-height:7.6px;font-weight:400;">CH44 3199 9123 0008 8901 2</div><div class="t" style="left:254.20000000000005px;top:442.37px;font-size:7.6px;line-height:7.6px;font-weight:400;">Street Food Technologies</div><div class="t" style="left:254.20000000000005px;top:451.17px;font-size:7.6px;line-height:7.6px;font-weight:400;">Food Street 10</div><div class="t" style="left:254.20000000000005px;top:460.07px;font-size:7.6px;line-height:7.6px;font-weight:400;">8000 Z&uuml;rich</div><div class="t" style="left:254.20000000000005px;top:476.84px;font-size:6.1px;line-height:6.1px;font-weight:700;">Reference</div><div class="t" style="left:254.20000000000005px;top:483.57px;font-size:7.6px;line-height:7.6px;font-weight:400;">21 00000 00003 13947 14300 09017</div><div class="t" style="left:254.20000000000005px;top:501.54px;font-size:6.1px;line-height:6.1px;font-weight:700;">Additional information</div><div class="t" style="left:254.20000000000005px;top:509.07px;font-size:7.6px;line-height:7.6px;font-weight:400;">//S1/10/12345678/11/191110/20/My Cu</div><div class="t" style="left:254.20000000000005px;top:517.87px;font-size:7.6px;line-height:7.6px;font-weight:400;">stomer Ref/30/111222333/31/19010119</div><div class="t" style="left:254.20000000000005px;top:526.57px;font-size:7.6px;line-height:7.6px;font-weight:400;">1231/32/7.7:1857.01;3.7:1928.64;2.5</div><div class="t" style="left:254.20000000000005px;top:535.37px;font-size:7.6px;line-height:7.6px;font-weight:400;">:975.61/40/3:10</div><div class="t" style="left:254.20000000000005px;top:551.74px;font-size:6.1px;line-height:6.1px;font-weight:700;">Payable by</div><div class="t" style="left:254.20000000000005px;top:558.97px;font-size:7.6px;line-height:7.6px;font-weight:400;">Topal_ISO20022_T</div><div class="t" style="left:254.20000000000005px;top:567.77px;font-size:7.6px;line-height:7.6px;font-weight:400;">ISO20022 Street 10</div><div class="t" style="left:254.20000000000005px;top:576.57px;font-size:7.6px;line-height:7.6px;font-weight:400;">80 Z&uuml;rich</div>
</div>
<div class="a" style="left:1px;top:802px;width:1569px;height:1px;background:#fff"></div>
<div class="a" style="left:1px;top:803px;width:1569px;height:21px;border-radius:0 0 4px 4px;background:linear-gradient(#dde9fb 0%,#c3d6f5 40%,#a3c0ee 75%,#87abe6 100%)"></div>
<div class="a" style="left:4px;top:0;width:1563px;height:1px;background:#6c6c6c"></div>
<div class="a" style="left:0;top:4px;width:1px;height:817px;background:#6c6964"></div>
<div class="a" style="left:1570px;top:4px;width:1px;height:817px;background:#6c6964"></div>
<div class="a" style="left:4px;top:824px;width:1563px;height:1px;background:#6b6763"></div>
</body></html>
